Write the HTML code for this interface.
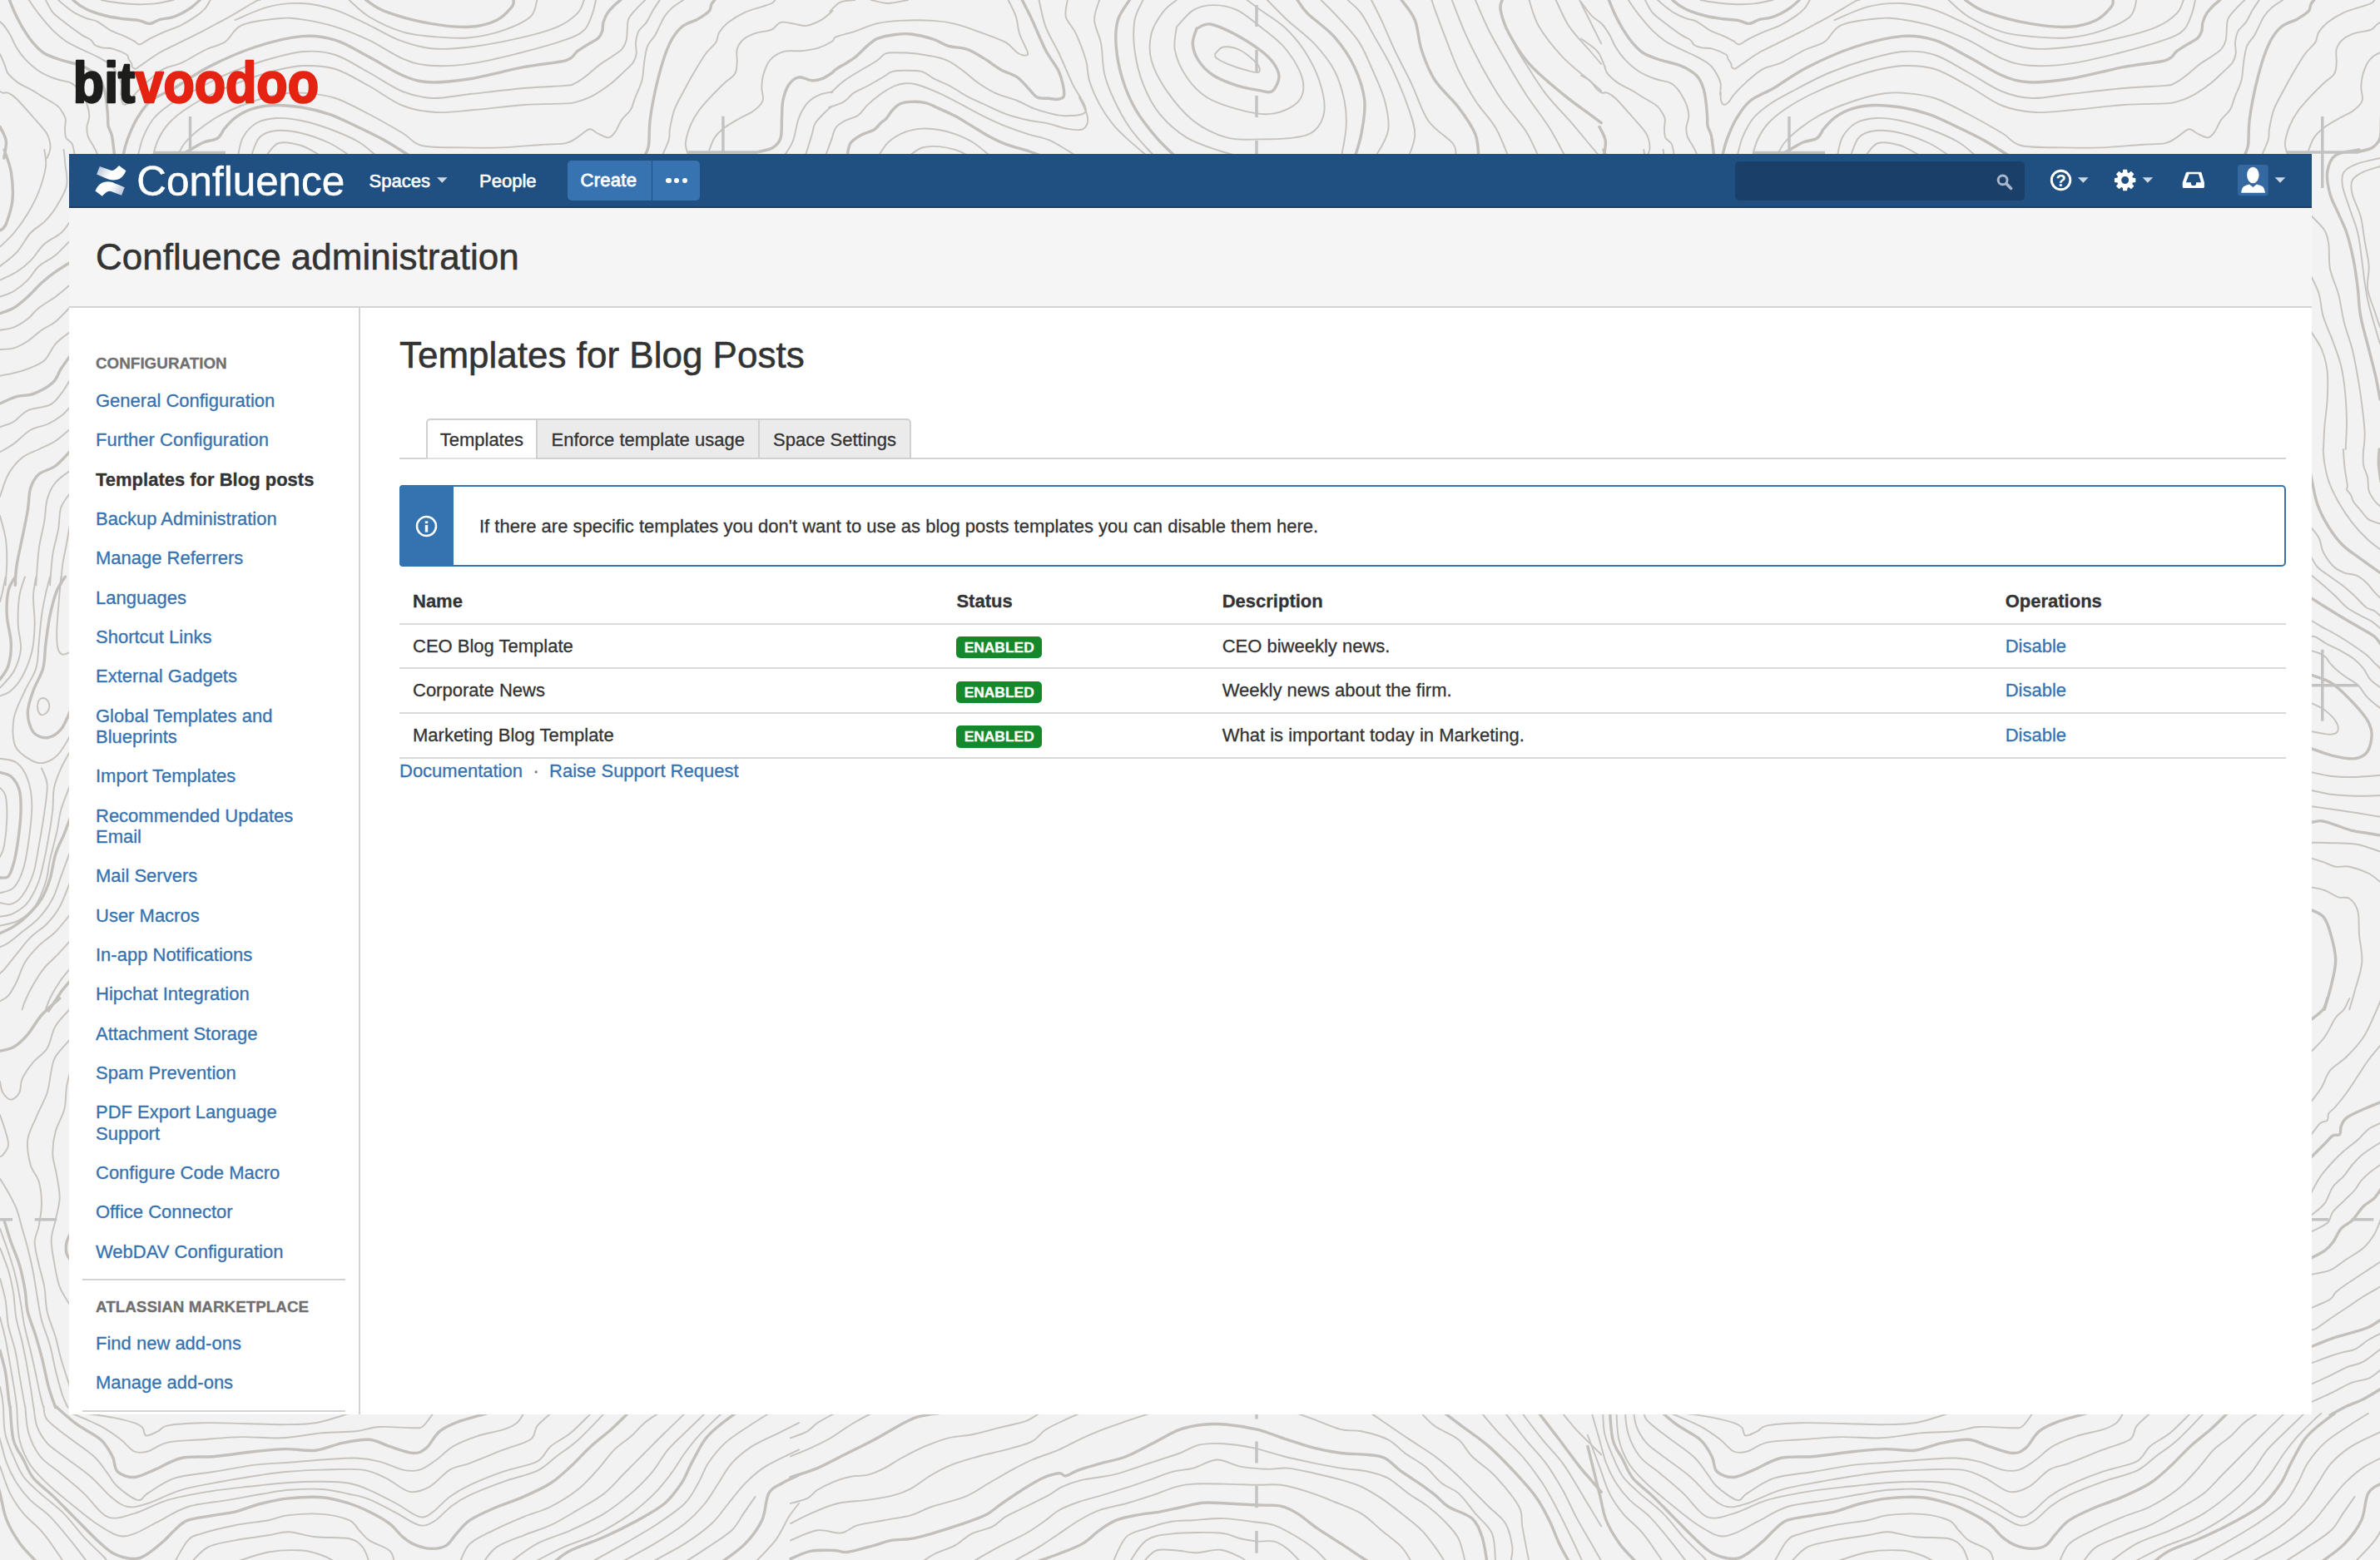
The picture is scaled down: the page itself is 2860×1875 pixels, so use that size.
<!DOCTYPE html>
<html lang="en">
<head>
<meta charset="utf-8">
<title>Templates for Blog Posts - Confluence administration</title>
<style>
*{box-sizing:border-box;margin:0;padding:0}
html,body{width:2860px;height:1875px;overflow:hidden}
body{position:relative;background:#f2f2f2;font-family:"Liberation Sans",Arial,Helvetica,sans-serif;font-size:22px;color:#333;-webkit-font-smoothing:antialiased;-webkit-text-stroke-width:.3px}
a{color:#3572b0;text-decoration:none}
#topo{position:absolute;left:0;top:0;width:2860px;height:1875px}
#brand{position:absolute;left:88px;top:56px;width:300px;height:80px;overflow:visible}
#wrap{position:absolute;left:83px;top:185px;width:2695px;height:1515px;background:#fff;overflow:hidden}
/* header */
#hdr{position:absolute;left:0;top:0;width:2695px;height:65px;background:#205081;border-bottom:2px solid #1c3d63;color:#fff}
#hdr .abs{position:absolute}
#cflogo{position:absolute;left:30px;top:12px;width:40px;height:40px}
#cfword{position:absolute;left:80px;top:4px;width:260px;height:56px}
.nav{position:absolute;top:.7px;height:63px;line-height:63px;font-size:22px;color:#fff;white-space:nowrap;-webkit-text-stroke:.6px #fff}
.caret{position:absolute;width:0;height:0;border-left:6.5px solid transparent;border-right:6.5px solid transparent;border-top:6.5px solid #c3d0df}
#create{position:absolute;left:599px;top:8px;width:101px;height:48px;background:#3873b1;border-radius:5px 0 0 5px;line-height:48.4px;text-align:left;padding-left:15.6px;font-size:22px;letter-spacing:.25px;-webkit-text-stroke:.8px #fff}
#more{position:absolute;left:701px;top:8px;width:57px;height:48px;background:#3873b1;border-radius:0 5px 5px 0}
#more i{position:absolute;top:20.5px;width:6.4px;height:6.4px;border-radius:50%;background:#fff}
#search{position:absolute;left:2002px;top:8.5px;width:347.5px;height:47px;background:#1a3f69;border-radius:5px}
.hic{position:absolute}
/* page header */
#phdr{position:absolute;left:0;top:65px;width:2695px;height:120px;background:#f5f5f5;border-bottom:2px solid #d3d3d3;z-index:2}
#phdr h1{-webkit-text-stroke-width:.55px;position:absolute;left:32px;top:25.6px;font-size:44px;font-weight:400;line-height:66px;color:#333;white-space:nowrap}
/* sidebar */
#side{position:absolute;left:0;top:184px;width:350px;height:1331px;border-right:2px solid #d3d3d3;background:#fff}
#side .hd{position:absolute;left:32px;font-size:18.85px;font-weight:700;color:#707070;line-height:25px;white-space:nowrap}
#side ul{list-style:none;position:absolute;left:32px;width:290px}
#side li{padding:11.06px 0;line-height:25.25px;font-size:22px}
#side li.act{font-weight:700;color:#333}
#side hr{position:absolute;left:16px;width:316px;border:0;border-top:2px solid #d3d3d3;height:0}
/* main */
#main{position:absolute;left:351px;top:184px;width:2344px;height:1331px;background:#fff}
#main h1{-webkit-text-stroke-width:.55px;position:absolute;left:46px;top:25px;font-size:44px;font-weight:400;line-height:66px;color:#333;white-space:nowrap}
#tabs{position:absolute;left:46px;top:134px;width:2266.5px;height:49px;border-bottom:2px solid #d3d3d3}
.tab{position:absolute;top:0;height:49px;border:2px solid #d0d0d0;background:#ebebeb;line-height:48.9px;font-size:22px;color:#333;text-align:center;white-space:nowrap}
.tab.on{background:#fff;border-bottom-color:#e0e0e0;border-radius:5px 0 0 0}
.tab.last{border-radius:0 5px 0 0}
#info{position:absolute;left:46px;top:214px;width:2266.5px;height:98px;border:2px solid #3572b0;border-radius:5px;background:#fff}
#info .bar{position:absolute;left:-2px;top:-2px;width:65px;height:98px;background:#3572b0;border-radius:4px 0 0 4px}
#info p{position:absolute;left:94px;top:34px;line-height:28px;font-size:22px;color:#333;white-space:nowrap}
table{position:absolute;left:46px;top:326.1px;width:2266.5px;border-collapse:collapse;font-size:22px}
th,td{text-align:left;font-weight:400;padding:0 0 0 16px;height:53.7px;border-bottom:2px solid #d9d9d9;vertical-align:middle;white-space:nowrap}
th{font-weight:700;height:54.6px;padding-top:2.4px}
.loz{display:inline-block;width:102.6px;height:26.4px;border-radius:5px;background:#14892c;color:#fff;font-size:17.4px;font-weight:700;line-height:26.4px;text-align:center;vertical-align:middle;position:relative;top:1px}
#links{position:absolute;left:46px;top:543.8px;line-height:28px;font-size:22px;white-space:nowrap}
#links span{color:#707070;margin:0 12.4px 0 12.4px}
</style>
</head>
<body>
<svg id="topo" viewBox="0 0 2860 1875">
<g id="tl">
<path fill="none" stroke="#c6c2be" stroke-width="1.9" stroke-linecap="round" d="M104.9,1698.9C110.3,1699.7 127.7,1702.2 137.2,1704.1C146.6,1706.0 155.6,1708.2 161.4,1710.2C167.1,1712.2 169.1,1713.7 171.4,1716.2C173.8,1718.8 172.4,1724.8 175.5,1725.5C178.5,1726.2 185.2,1722.3 189.6,1720.3C194.0,1718.2 193.0,1715.1 201.7,1713.4C210.4,1711.7 227.2,1710.6 242.0,1710.2C256.8,1709.8 274.3,1710.6 290.4,1711.0C306.6,1711.3 324.1,1712.3 338.8,1712.2C353.6,1712.1 365.7,1712.4 379.2,1710.2C392.6,1708.0 412.8,1700.8 419.5,1698.9
M86.7,1698.9C92.4,1701.4 111.3,1709.0 121.0,1714.2C130.8,1719.4 138.5,1725.3 145.2,1730.3C151.9,1735.4 156.0,1742.1 161.4,1744.5C166.7,1746.8 170.8,1746.3 177.5,1744.5C184.2,1742.6 190.9,1735.9 201.7,1733.6C212.5,1731.2 227.2,1731.4 242.0,1730.3C256.8,1729.3 274.3,1727.4 290.4,1727.1C306.6,1726.8 322.7,1729.1 338.8,1728.3C355.0,1727.5 372.5,1723.6 387.3,1722.3C402.0,1720.9 416.2,1721.5 427.6,1720.3C439.0,1719.0 444.4,1715.7 455.8,1715.0C467.3,1714.3 487.4,1716.4 496.2,1716.2C504.9,1716.1 504.2,1717.1 508.3,1714.2C512.3,1711.3 518.4,1701.4 520.4,1698.9
M52.4,1690.0C53.1,1692.7 51.8,1700.1 56.5,1706.1C61.2,1712.2 71.3,1718.9 80.7,1726.3C90.1,1733.7 104.9,1743.1 112.9,1750.5C121.0,1757.9 124.4,1764.6 129.1,1770.7C133.8,1776.7 135.1,1781.4 141.2,1786.8C147.2,1792.2 159.3,1801.6 165.4,1802.9C171.4,1804.3 170.1,1799.3 177.5,1794.9C184.9,1790.5 196.3,1781.1 209.8,1776.7C223.2,1772.4 242.0,1771.4 258.2,1768.7C274.3,1766.0 291.8,1762.4 306.6,1760.6C321.4,1758.8 333.5,1758.8 346.9,1757.8C360.4,1756.8 373.8,1755.4 387.3,1754.5C400.7,1753.7 416.2,1752.2 427.6,1752.5C439.0,1752.9 446.4,1754.2 455.8,1756.6C465.2,1758.9 476.0,1765.0 484.1,1766.6C492.1,1768.3 497.5,1768.7 504.2,1766.6C511.0,1764.6 517.7,1759.2 524.4,1754.5C531.1,1749.8 536.5,1743.1 544.6,1738.4C552.6,1733.7 562.7,1729.7 572.8,1726.3C582.9,1722.9 597.0,1720.9 605.1,1718.2C613.2,1715.5 617.2,1713.4 621.2,1710.2C625.3,1706.9 627.9,1700.8 629.3,1698.9
M40.3,1690.0C41.0,1694.0 41.7,1706.8 44.4,1714.2C47.1,1721.6 51.1,1728.3 56.5,1734.4C61.9,1740.4 67.9,1743.8 76.6,1750.5C85.4,1757.2 99.5,1766.6 108.9,1774.7C118.3,1782.8 125.7,1792.9 133.1,1798.9C140.5,1805.0 145.9,1809.7 153.3,1811.0C160.7,1812.4 166.7,1810.3 177.5,1807.0C188.2,1803.6 203.0,1795.2 217.8,1790.8C232.6,1786.5 250.1,1783.8 266.2,1780.8C282.4,1777.7 301.2,1774.7 314.6,1772.7C328.1,1770.7 334.8,1769.7 346.9,1768.7C359.0,1767.7 372.5,1767.0 387.3,1766.6C402.0,1766.3 422.9,1765.0 435.7,1766.6C448.4,1768.3 454.5,1772.4 463.9,1776.7C473.3,1781.1 483.4,1791.2 492.1,1792.9C500.9,1794.5 508.3,1791.2 516.3,1786.8C524.4,1782.4 532.5,1771.4 540.5,1766.6C548.6,1761.9 554.0,1762.6 564.7,1758.6C575.5,1754.5 593.0,1747.1 605.1,1742.4C617.2,1737.7 630.6,1735.0 637.4,1730.3C644.1,1725.6 641.4,1719.4 645.4,1714.2C649.5,1709.0 658.9,1701.4 661.6,1698.9
M30.3,1690.0C30.9,1695.4 31.3,1712.2 34.3,1722.3C37.3,1732.4 42.0,1742.4 48.4,1750.5C54.8,1758.6 63.9,1763.3 72.6,1770.7C81.4,1778.1 91.4,1786.1 100.8,1794.9C110.3,1803.6 119.0,1819.1 129.1,1823.1C139.2,1827.2 149.3,1822.4 161.4,1819.1C173.5,1815.7 186.9,1807.3 201.7,1802.9C216.5,1798.6 234.0,1795.6 250.1,1792.9C266.2,1790.2 282.4,1788.6 298.5,1786.8C314.6,1785.0 332.1,1783.0 346.9,1782.0C361.7,1781.0 375.2,1780.6 387.3,1780.8C399.4,1780.9 410.1,1781.1 419.5,1782.8C428.9,1784.5 434.3,1786.8 443.7,1790.8C453.1,1794.9 465.9,1801.6 476.0,1807.0C486.1,1812.4 496.8,1821.4 504.2,1823.1C511.6,1824.8 514.3,1821.1 520.4,1817.1C526.4,1813.0 533.1,1804.3 540.5,1798.9C547.9,1793.5 554.0,1789.8 564.7,1784.8C575.5,1779.8 591.6,1773.4 605.1,1768.7C618.5,1764.0 636.0,1761.6 645.4,1756.6C654.8,1751.5 654.8,1744.1 661.6,1738.4C668.3,1732.7 677.7,1728.9 685.8,1722.3C693.8,1715.7 705.9,1702.8 710.0,1698.9
M20.2,1690.0C20.7,1696.7 20.7,1718.6 23.4,1730.3C26.1,1742.1 30.5,1751.5 36.3,1760.6C42.2,1769.7 50.4,1777.1 58.5,1784.8C66.6,1792.5 75.6,1799.6 84.7,1807.0C93.8,1814.4 103.5,1822.8 112.9,1829.2C122.4,1835.6 133.1,1843.0 141.2,1845.3C149.3,1847.7 153.3,1846.0 161.4,1843.3C169.4,1840.6 178.8,1834.5 189.6,1829.2C200.3,1823.8 211.8,1815.4 225.9,1811.0C240.0,1806.6 259.5,1805.5 274.3,1802.9C289.1,1800.4 302.5,1797.7 314.6,1795.7C326.7,1793.7 334.8,1791.8 346.9,1790.8C359.0,1789.9 375.2,1789.2 387.3,1790.0C399.4,1790.8 410.1,1793.7 419.5,1795.7C428.9,1797.7 434.3,1798.4 443.7,1802.1C453.1,1805.9 465.9,1813.1 476.0,1818.3C486.1,1823.5 496.5,1831.6 504.2,1833.2C512.0,1834.8 516.0,1831.8 522.4,1828.0C528.8,1824.1 535.5,1815.4 542.6,1810.2C549.6,1805.0 554.3,1801.8 564.7,1796.9C575.2,1792.0 591.6,1785.6 605.1,1780.8C618.5,1775.9 634.7,1773.0 645.4,1767.9C656.2,1762.7 661.6,1755.8 669.6,1749.7C677.7,1743.7 684.4,1740.0 693.8,1731.5C703.2,1723.1 720.7,1704.3 726.1,1698.9
M-14.1,1680.9C-11.8,1689.2 -3.7,1717.4 0.0,1730.3C3.7,1743.3 4.7,1749.8 8.1,1758.6C11.4,1767.3 15.5,1775.4 20.2,1782.8C24.9,1790.2 29.6,1796.2 36.3,1802.9C43.0,1809.7 52.4,1815.1 60.5,1823.1C68.6,1831.2 77.3,1842.3 84.7,1851.4C92.1,1860.4 101.5,1873.2 104.9,1877.6
M-14.1,1725.0C-11.8,1731.2 -4.4,1751.0 0.0,1762.6C4.4,1774.3 7.4,1785.5 12.1,1794.9C16.8,1804.3 21.5,1811.0 28.2,1819.1C35.0,1827.2 44.4,1833.5 52.4,1843.3C60.5,1853.0 72.6,1871.9 76.6,1877.6
M4.0,1690.0C4.4,1695.4 4.0,1712.2 6.1,1722.3C8.1,1732.4 12.4,1741.8 16.1,1750.5C19.8,1759.2 22.9,1767.3 28.2,1774.7C33.6,1782.1 40.3,1787.5 48.4,1794.9C56.5,1802.3 67.9,1810.3 76.6,1819.1C85.4,1827.8 92.8,1838.6 100.8,1847.3C108.9,1856.1 120.3,1866.5 125.1,1871.5C129.8,1876.6 128.4,1876.6 129.1,1877.6
M209.8,1877.6C212.5,1873.2 220.5,1857.1 225.9,1851.4C231.3,1845.6 232.6,1846.3 242.0,1843.3C251.4,1840.3 268.9,1835.9 282.4,1833.2C295.8,1830.5 312.0,1829.2 322.7,1827.2C333.5,1825.1 336.2,1822.3 346.9,1821.1C357.7,1819.9 375.2,1818.9 387.3,1819.9C399.4,1820.9 412.1,1823.9 419.5,1827.2C426.9,1830.4 427.6,1835.2 431.6,1839.3C435.7,1843.3 437.7,1847.3 443.7,1851.4C449.8,1855.4 462.9,1859.1 467.9,1863.5C473.0,1867.8 473.0,1875.2 474.0,1877.6
M229.9,1877.6C233.3,1874.6 241.4,1863.8 250.1,1859.4C258.8,1855.1 270.3,1853.7 282.4,1851.4C294.5,1849.0 312.0,1847.0 322.7,1845.3C333.5,1843.6 337.5,1840.9 346.9,1841.3C356.3,1841.6 367.1,1846.0 379.2,1847.3C391.3,1848.7 410.1,1847.3 419.5,1849.3C428.9,1851.4 431.6,1854.7 435.7,1859.4C439.7,1864.1 442.4,1874.6 443.7,1877.6
M282.4,1877.6C289.1,1875.6 309.3,1867.8 322.7,1865.5C336.2,1863.1 352.3,1862.8 363.0,1863.5C373.8,1864.1 380.5,1867.2 387.3,1869.5C394.0,1871.9 400.7,1876.2 403.4,1877.6
M552.6,1877.6C554.7,1873.9 558.0,1861.8 564.7,1855.4C571.5,1849.0 582.2,1844.6 593.0,1839.3C603.7,1833.9 617.9,1827.8 629.3,1823.1C640.7,1818.4 650.8,1816.4 661.6,1811.0C672.3,1805.6 684.4,1798.2 693.8,1790.8C703.2,1783.5 710.6,1774.7 718.0,1766.6C725.4,1758.6 731.5,1749.2 738.2,1742.4C744.9,1735.7 752.3,1731.7 758.4,1726.3C764.4,1720.9 769.1,1714.7 774.5,1710.2C779.9,1705.6 788.0,1700.8 790.6,1698.9
M580.9,1877.6C583.6,1874.6 588.9,1864.8 597.0,1859.4C605.1,1854.0 618.5,1849.7 629.3,1845.3C640.0,1840.9 650.8,1838.2 661.6,1833.2C672.3,1828.2 683.1,1821.4 693.8,1815.1C704.6,1808.7 716.7,1802.3 726.1,1794.9C735.5,1787.5 742.2,1778.7 750.3,1770.7C758.4,1762.6 766.4,1754.5 774.5,1746.5C782.6,1738.4 790.6,1730.2 798.7,1722.3C806.8,1714.3 818.9,1702.8 822.9,1698.9
M613.2,1877.6C618.5,1873.9 633.3,1861.8 645.4,1855.4C657.5,1849.0 672.3,1845.3 685.8,1839.3C699.2,1833.2 714.0,1826.5 726.1,1819.1C738.2,1811.7 749.0,1802.9 758.4,1794.9C767.8,1786.8 775.2,1779.4 782.6,1770.7C790.0,1761.9 796.0,1750.5 802.7,1742.4C809.5,1734.4 815.5,1729.5 822.9,1722.3C830.3,1715.0 843.1,1702.8 847.1,1698.9
M641.4,1877.6C647.4,1874.6 664.9,1865.1 677.7,1859.4C690.5,1853.7 704.6,1850.0 718.0,1843.3C731.5,1836.6 746.9,1827.2 758.4,1819.1C769.8,1811.0 778.5,1802.9 786.6,1794.9C794.7,1786.8 800.7,1778.7 806.8,1770.7C812.8,1762.6 817.5,1753.9 822.9,1746.5C828.3,1739.1 833.0,1733.0 839.0,1726.3C845.1,1719.6 854.5,1710.7 859.2,1706.1C863.9,1701.6 865.9,1700.1 867.3,1698.9
M710.0,1877.6C716.7,1873.9 736.9,1863.1 750.3,1855.4C763.7,1847.7 778.5,1839.3 790.6,1831.2C802.7,1823.1 814.8,1815.1 822.9,1807.0C831.0,1798.9 834.3,1790.8 839.0,1782.8C843.8,1774.7 845.8,1766.6 851.1,1758.6C856.5,1750.5 863.3,1741.8 871.3,1734.4C879.4,1727.0 890.8,1720.1 899.6,1714.2C908.3,1708.3 919.7,1701.4 923.8,1698.9
M746.3,1877.6C753.0,1873.9 773.8,1863.1 786.6,1855.4C799.4,1847.7 812.8,1839.3 822.9,1831.2C833.0,1823.1 840.4,1815.1 847.1,1807.0C853.8,1798.9 857.9,1790.8 863.3,1782.8C868.6,1774.7 872.7,1766.0 879.4,1758.6C886.1,1751.2 894.2,1744.5 903.6,1738.4C913.0,1732.4 926.4,1727.0 935.9,1722.3C945.3,1717.6 956.0,1712.2 960.1,1710.2
M782.6,1877.6C789.3,1873.9 810.8,1863.1 822.9,1855.4C835.0,1847.7 846.4,1839.3 855.2,1831.2C863.9,1823.1 868.6,1815.1 875.4,1807.0C882.1,1798.9 888.1,1790.2 895.5,1782.8C902.9,1775.4 909.0,1769.3 919.7,1762.6C930.5,1755.9 953.3,1745.8 960.1,1742.4
M907.6,1877.6C911.7,1873.2 925.1,1860.4 931.8,1851.4C938.6,1842.3 943.3,1830.5 948.0,1823.1C952.7,1815.7 958.0,1809.7 960.1,1807.0
M822.9,1877.6C827.6,1874.6 841.7,1865.8 851.1,1859.4C860.6,1853.0 872.3,1846.0 879.4,1839.3C886.4,1832.5 888.8,1825.8 893.5,1819.1C898.2,1812.4 905.3,1802.3 907.6,1798.9
M950.0,1728.3C953.4,1727.0 964.8,1723.3 970.2,1720.3C975.5,1717.2 976.9,1713.7 982.3,1710.2C987.6,1706.6 999.1,1700.8 1002.4,1698.9
M950.0,1750.5C954.0,1748.8 966.1,1744.1 974.2,1740.4C982.3,1736.7 990.3,1733.0 998.4,1728.3C1006.5,1723.6 1014.5,1717.1 1022.6,1712.2C1030.7,1707.3 1042.8,1701.1 1046.8,1698.9
M950.0,1807.0C953.4,1806.0 964.8,1803.6 970.2,1800.9C975.5,1798.2 976.9,1794.2 982.3,1790.8C987.6,1787.5 995.7,1783.5 1002.4,1780.8C1009.2,1778.1 1015.9,1776.1 1022.6,1774.7C1029.3,1773.4 1036.1,1774.4 1042.8,1772.7C1049.5,1771.0 1056.2,1768.0 1062.9,1764.6C1069.7,1761.3 1075.1,1756.9 1083.1,1752.5C1091.2,1748.2 1101.9,1742.4 1111.4,1738.4C1120.8,1734.4 1130.2,1730.7 1139.6,1728.3C1149.0,1726.0 1157.7,1726.3 1167.8,1724.3C1177.9,1722.3 1189.3,1718.9 1200.1,1716.2C1210.9,1713.5 1224.3,1711.0 1232.4,1708.2C1240.4,1705.3 1245.8,1700.4 1248.5,1698.9
M950.0,1831.2C954.0,1829.2 964.8,1823.1 974.2,1819.1C983.6,1815.1 995.0,1809.7 1006.5,1807.0C1017.9,1804.3 1031.4,1804.6 1042.8,1802.9C1054.2,1801.3 1066.3,1799.3 1075.1,1796.9C1083.8,1794.5 1087.8,1792.9 1095.2,1788.8C1102.6,1784.8 1111.4,1777.4 1119.4,1772.7C1127.5,1768.0 1134.2,1764.3 1143.6,1760.6C1153.0,1756.9 1167.8,1752.9 1175.9,1750.5C1184.0,1748.2 1185.3,1748.2 1192.0,1746.5C1198.8,1744.8 1208.2,1742.8 1216.2,1740.4C1224.3,1738.1 1233.7,1736.1 1240.4,1732.4C1247.2,1728.7 1249.9,1722.6 1256.6,1718.2C1263.3,1713.9 1274.1,1709.4 1280.8,1706.1C1287.5,1702.9 1294.2,1700.1 1296.9,1698.9
M950.0,1851.4C955.4,1849.3 972.2,1840.7 982.3,1839.3C992.4,1837.8 1002.4,1843.5 1010.5,1842.5C1018.6,1841.5 1021.9,1835.8 1030.7,1833.2C1039.4,1830.6 1052.2,1829.2 1062.9,1827.2C1073.7,1825.1 1085.8,1823.8 1095.2,1821.1C1104.6,1818.4 1108.7,1814.7 1119.4,1811.0C1130.2,1807.3 1148.3,1803.6 1159.8,1798.9C1171.2,1794.2 1178.6,1788.2 1188.0,1782.8C1197.4,1777.4 1207.5,1771.4 1216.2,1766.6C1225.0,1761.9 1231.0,1758.6 1240.4,1754.5C1249.9,1750.5 1263.3,1746.5 1272.7,1742.4C1282.1,1738.4 1288.2,1734.4 1296.9,1730.3C1305.7,1726.3 1315.7,1721.9 1325.2,1718.2C1334.6,1714.5 1344.0,1711.4 1353.4,1708.2C1362.8,1704.9 1376.9,1700.4 1381.6,1698.9
M1107.3,1877.6C1110.0,1875.9 1116.7,1870.9 1123.5,1867.5C1130.2,1864.1 1140.3,1861.4 1147.7,1857.4C1155.1,1853.4 1160.4,1847.0 1167.8,1843.3C1175.2,1839.6 1185.3,1838.6 1192.0,1835.2C1198.8,1831.9 1201.4,1827.2 1208.2,1823.1C1214.9,1819.1 1223.6,1815.4 1232.4,1811.0C1241.1,1806.6 1253.2,1800.9 1260.6,1796.9C1268.0,1792.9 1270.0,1789.8 1276.7,1786.8C1283.5,1783.8 1290.9,1781.1 1300.9,1778.7C1311.0,1776.4 1325.8,1775.4 1337.3,1772.7C1348.7,1770.0 1360.1,1765.6 1369.5,1762.6C1378.9,1759.6 1385.7,1757.2 1393.7,1754.5C1401.8,1751.9 1409.9,1749.5 1417.9,1746.5C1426.0,1743.4 1433.4,1738.3 1442.1,1736.4C1450.9,1734.5 1459.6,1734.5 1470.4,1735.2C1481.1,1735.9 1494.6,1737.9 1506.7,1740.4C1518.8,1743.0 1530.9,1747.5 1543.0,1750.5C1555.1,1753.5 1567.9,1756.2 1579.3,1758.6C1590.7,1760.9 1600.8,1762.9 1611.6,1764.6C1622.3,1766.3 1634.4,1766.6 1643.8,1768.7C1653.2,1770.7 1660.0,1772.4 1668.0,1776.7C1676.1,1781.1 1684.2,1789.2 1692.2,1794.9C1700.3,1800.6 1709.0,1805.3 1716.4,1811.0C1723.8,1816.7 1730.6,1822.8 1736.6,1829.2C1742.7,1835.6 1748.7,1841.3 1752.7,1849.3C1756.8,1857.4 1759.5,1872.9 1760.8,1877.6
M1167.8,1877.6C1173.2,1874.6 1189.3,1865.1 1200.1,1859.4C1210.9,1853.7 1223.0,1848.7 1232.4,1843.3C1241.8,1837.9 1249.9,1831.9 1256.6,1827.2C1263.3,1822.4 1266.0,1818.7 1272.7,1815.1C1279.4,1811.4 1288.2,1808.0 1296.9,1805.0C1305.7,1801.9 1315.1,1799.9 1325.2,1796.9C1335.2,1793.9 1348.0,1789.8 1357.4,1786.8C1366.8,1783.8 1372.9,1781.8 1381.6,1778.7C1390.4,1775.7 1401.1,1771.0 1409.9,1768.7C1418.6,1766.3 1425.3,1767.0 1434.1,1764.6C1442.8,1762.3 1452.9,1754.9 1462.3,1754.5C1471.7,1754.2 1480.5,1760.7 1490.5,1762.6C1500.6,1764.5 1513.4,1765.5 1522.8,1765.8C1532.2,1766.2 1537.6,1763.8 1547.0,1764.6C1556.4,1765.4 1568.5,1768.3 1579.3,1770.7C1590.0,1773.0 1602.1,1776.1 1611.6,1778.7C1621.0,1781.4 1627.7,1783.1 1635.8,1786.8C1643.8,1790.5 1651.9,1795.6 1660.0,1800.9C1668.0,1806.3 1676.1,1812.7 1684.2,1819.1C1692.2,1825.5 1701.6,1832.5 1708.4,1839.3C1715.1,1846.0 1719.8,1853.0 1724.5,1859.4C1729.2,1865.8 1734.6,1874.6 1736.6,1877.6
M1216.2,1877.6C1221.6,1874.6 1239.1,1865.1 1248.5,1859.4C1257.9,1853.7 1264.6,1848.7 1272.7,1843.3C1280.8,1837.9 1288.8,1831.9 1296.9,1827.2C1305.0,1822.4 1311.7,1818.4 1321.1,1815.1C1330.5,1811.7 1342.6,1810.0 1353.4,1807.0C1364.1,1804.0 1375.6,1800.3 1385.7,1796.9C1395.7,1793.5 1405.8,1789.0 1413.9,1786.8C1422.0,1784.6 1424.7,1784.1 1434.1,1783.6C1443.5,1783.0 1457.6,1783.4 1470.4,1783.6C1483.1,1783.8 1499.3,1784.6 1510.7,1784.8C1522.1,1785.0 1528.9,1783.5 1538.9,1784.8C1549.0,1786.1 1560.5,1789.5 1571.2,1792.9C1582.0,1796.2 1592.7,1800.6 1603.5,1805.0C1614.2,1809.3 1626.3,1813.4 1635.8,1819.1C1645.2,1824.8 1651.9,1832.5 1660.0,1839.3C1668.0,1846.0 1678.1,1853.0 1684.2,1859.4C1690.2,1865.8 1694.3,1874.6 1696.3,1877.6
M1337.3,1877.6C1339.9,1872.5 1346.7,1854.0 1353.4,1847.3C1360.1,1840.6 1368.9,1840.3 1377.6,1837.2C1386.3,1834.2 1396.4,1830.8 1405.8,1829.2C1415.2,1827.5 1423.3,1827.8 1434.1,1827.2C1444.8,1826.5 1458.3,1824.8 1470.4,1825.1C1482.5,1825.5 1496.6,1827.8 1506.7,1829.2C1516.8,1830.5 1522.8,1830.5 1530.9,1833.2C1538.9,1835.9 1547.0,1840.6 1555.1,1845.3C1563.2,1850.0 1572.6,1856.1 1579.3,1861.4C1586.0,1866.8 1592.7,1874.9 1595.4,1877.6
M1357.4,1877.6C1360.8,1873.2 1368.9,1857.1 1377.6,1851.4C1386.3,1845.6 1395.1,1844.8 1409.9,1843.3C1424.7,1841.8 1452.9,1841.5 1466.3,1842.5C1479.8,1843.5 1483.1,1847.7 1490.5,1849.3C1497.9,1851.0 1504.0,1852.0 1510.7,1852.6C1517.4,1853.1 1524.8,1851.1 1530.9,1852.6C1536.9,1854.0 1541.6,1857.3 1547.0,1861.4C1552.4,1865.6 1560.5,1874.9 1563.2,1877.6
M1373.6,1877.6C1376.2,1875.2 1383.0,1865.8 1389.7,1863.5C1396.4,1861.1 1405.8,1863.0 1413.9,1863.5C1422.0,1863.9 1429.4,1866.4 1438.1,1866.3C1446.8,1866.1 1457.6,1861.8 1466.3,1862.7C1475.1,1863.5 1485.2,1869.0 1490.5,1871.5C1495.9,1874.0 1497.3,1876.6 1498.6,1877.6
M1647.9,1698.9C1652.6,1702.1 1667.4,1712.3 1676.1,1718.2C1684.8,1724.2 1692.2,1729.0 1700.3,1734.4C1708.4,1739.8 1716.4,1744.5 1724.5,1750.5C1732.6,1756.6 1741.3,1764.0 1748.7,1770.7C1756.1,1777.4 1762.2,1784.1 1768.9,1790.8C1775.6,1797.6 1782.3,1804.3 1789.0,1811.0C1795.8,1817.7 1804.5,1823.1 1809.2,1831.2C1813.9,1839.3 1816.3,1851.7 1817.3,1859.4C1818.3,1867.2 1815.6,1874.6 1815.3,1877.6
M1708.4,1698.9C1711.1,1701.4 1717.1,1709.0 1724.5,1714.2C1731.9,1719.4 1745.3,1724.3 1752.7,1730.3C1760.1,1736.4 1761.5,1743.1 1768.9,1750.5C1776.3,1757.9 1787.7,1764.6 1797.1,1774.7C1806.5,1784.8 1820.0,1800.9 1825.4,1811.0C1830.7,1821.1 1827.4,1824.1 1829.4,1835.2C1831.4,1846.3 1836.1,1870.5 1837.5,1877.6
M1559.1,1698.9C1562.5,1700.1 1570.5,1702.9 1579.3,1706.1C1588.0,1709.4 1602.1,1715.9 1611.6,1718.2C1621.0,1720.6 1626.3,1718.2 1635.8,1720.3C1645.2,1722.3 1659.3,1726.0 1668.0,1730.3C1676.8,1734.7 1680.8,1741.1 1688.2,1746.5C1695.6,1751.9 1705.0,1756.6 1712.4,1762.6C1719.8,1768.7 1725.9,1777.4 1732.6,1782.8C1739.3,1788.2 1746.0,1788.8 1752.7,1794.9C1759.5,1800.9 1766.2,1811.0 1772.9,1819.1C1779.6,1827.2 1789.0,1833.5 1793.1,1843.3C1797.1,1853.0 1796.4,1871.9 1797.1,1877.6
M1781.0,1698.9C1784.3,1702.8 1793.1,1713.7 1801.1,1722.3C1809.2,1730.9 1820.6,1740.4 1829.4,1750.5C1838.1,1760.6 1846.9,1772.7 1853.6,1782.8C1860.3,1792.9 1864.3,1800.9 1869.7,1811.0C1875.1,1821.1 1880.5,1832.2 1885.9,1843.3C1891.2,1854.4 1899.3,1871.9 1902.0,1877.6
M1809.2,1698.9C1813.3,1704.1 1825.4,1720.4 1833.4,1730.3C1841.5,1740.3 1850.2,1748.5 1857.6,1758.6C1865.0,1768.7 1871.7,1780.1 1877.8,1790.8C1883.8,1801.6 1888.6,1813.0 1893.9,1823.1C1899.3,1833.2 1905.0,1842.5 1910.1,1851.4C1915.1,1860.2 1921.8,1871.9 1924.2,1876.1
M1829.4,1698.9C1833.4,1704.1 1845.5,1720.4 1853.6,1730.3C1861.7,1740.3 1870.4,1748.5 1877.8,1758.6C1885.2,1768.7 1892.6,1782.1 1898.0,1790.8C1903.3,1799.6 1905.7,1803.7 1910.1,1811.0C1914.4,1818.3 1921.8,1830.6 1924.2,1834.5
M1877.8,1698.9C1880.5,1702.1 1888.6,1712.3 1893.9,1718.2C1899.3,1724.2 1905.0,1729.3 1910.1,1734.4C1915.1,1739.4 1921.8,1746.1 1924.2,1748.5
M53.3,180.0C53.6,183.3 56.1,191.7 55.0,200.0C53.9,208.3 50.3,220.6 46.7,230.0C43.1,239.4 38.3,248.3 33.3,256.7C28.3,265.0 22.2,273.3 16.7,280.0C11.1,286.7 2.8,293.9 0.0,296.7
M76.7,180.0C76.9,182.8 77.8,189.4 78.3,196.7C78.9,203.9 81.9,214.4 80.0,223.3C78.1,232.2 71.1,242.8 66.7,250.0C62.2,257.2 58.3,261.7 53.3,266.7C48.3,271.7 42.2,273.9 36.7,280.0C31.1,286.1 26.1,296.7 20.0,303.3C13.9,310.0 3.3,317.2 0.0,320.0
M85.0,265.0C83.1,267.5 78.6,275.3 73.3,280.0C68.1,284.7 59.4,287.8 53.3,293.3C47.2,298.9 42.2,307.8 36.7,313.3C31.1,318.9 26.1,322.8 20.0,326.7C13.9,330.6 3.3,335.0 0.0,336.7
M85.0,288.3C81.9,291.4 73.1,301.4 66.7,306.7C60.3,311.9 52.2,315.0 46.7,320.0C41.1,325.0 38.3,331.7 33.3,336.7C28.3,341.7 22.2,346.7 16.7,350.0C11.1,353.3 2.8,355.6 0.0,356.7
M85.0,341.7C81.9,344.2 73.1,351.9 66.7,356.7C60.3,361.4 52.2,365.6 46.7,370.0C41.1,374.4 38.3,379.4 33.3,383.3C28.3,387.2 22.2,391.1 16.7,393.3C11.1,395.6 2.8,396.1 0.0,396.7
M85.0,368.3C81.9,371.4 72.5,381.9 66.7,386.7C60.8,391.4 55.6,392.8 50.0,396.7C44.4,400.6 38.9,406.4 33.3,410.0C27.8,413.6 22.2,416.7 16.7,418.3C11.1,420.0 2.8,419.7 0.0,420.0
M85.0,398.3C81.9,400.8 71.9,407.5 66.7,413.3C61.4,419.2 58.9,428.3 53.3,433.3C47.8,438.3 39.4,440.8 33.3,443.3C27.2,445.8 22.2,446.9 16.7,448.3C11.1,449.7 2.8,451.1 0.0,451.7
M85.0,455.0C83.1,458.1 77.5,468.1 73.3,473.3C69.2,478.6 66.7,483.3 60.0,486.7C53.3,490.0 40.6,490.0 33.3,493.3C26.1,496.7 22.2,503.3 16.7,506.7C11.1,510.0 2.8,512.2 0.0,513.3
M85.0,488.3C83.1,490.3 78.1,496.4 73.3,500.0C68.6,503.6 62.8,507.2 56.7,510.0C50.6,512.8 43.3,512.8 36.7,516.7C30.0,520.6 22.8,528.9 16.7,533.3C10.6,537.8 2.8,541.7 0.0,543.3
M85.0,515.0C81.9,517.5 73.1,525.8 66.7,530.0C60.3,534.2 53.3,536.7 46.7,540.0C40.0,543.3 32.8,545.0 26.7,550.0C20.6,555.0 14.4,562.2 10.0,570.0C5.6,577.8 1.7,592.2 0.0,596.7
M85.0,565.0C81.9,567.5 71.4,574.2 66.7,580.0C61.9,585.8 58.9,592.2 56.7,600.0C54.4,607.8 55.0,616.7 53.3,626.7C51.7,636.7 48.3,647.2 46.7,660.0C45.0,672.8 43.9,696.1 43.3,703.3
M85.0,591.7C83.1,594.7 75.8,602.5 73.3,610.0C70.8,617.5 71.7,627.2 70.0,636.7C68.3,646.1 65.0,655.6 63.3,666.7C61.7,677.8 60.6,697.2 60.0,703.3
M85.0,625.0C84.2,629.7 81.7,644.2 80.0,653.3C78.3,662.5 76.1,671.7 75.0,680.0C73.9,688.3 73.6,699.4 73.3,703.3
M0.0,620.0C1.1,624.4 5.3,637.8 6.7,646.7C8.1,655.6 8.3,663.9 8.3,673.3C8.3,682.8 6.9,698.3 6.7,703.3
M43.3,693.3C42.8,697.2 40.3,707.2 40.0,716.7C39.7,726.1 41.9,738.9 41.7,750.0C41.4,761.1 40.8,772.8 38.3,783.3C35.8,793.9 30.8,805.6 26.7,813.3C22.5,821.1 17.8,826.1 13.3,830.0C8.9,833.9 2.2,835.6 0.0,836.7
M6.7,693.3C6.1,696.1 4.4,705.0 3.3,710.0C2.2,715.0 0.6,721.1 0.0,723.3
M60.0,693.3C59.2,696.7 56.7,705.6 55.0,713.3C53.3,721.1 51.4,730.0 50.0,740.0C48.6,750.0 47.8,762.8 46.7,773.3C45.6,783.9 46.1,793.9 43.3,803.3C40.6,812.8 34.4,820.0 30.0,830.0C25.6,840.0 18.6,852.2 16.7,863.3C14.7,874.4 15.0,888.3 18.3,896.7C21.7,905.0 30.8,910.0 36.7,913.3C42.5,916.7 47.8,917.8 53.3,916.7C58.9,915.6 64.7,912.2 70.0,906.7C75.3,901.1 82.5,887.2 85.0,883.3
M73.3,693.3C72.9,698.3 71.5,712.8 70.7,723.3C69.8,733.9 68.6,747.5 68.3,756.7C68.1,765.8 68.2,773.3 69.3,778.3C70.4,783.3 72.4,785.8 75.0,786.7C77.6,787.5 83.3,783.9 85.0,783.3
M30.0,693.3C28.9,697.2 24.7,707.2 23.3,716.7C21.9,726.1 21.4,739.4 21.7,750.0C21.9,760.6 25.8,770.6 25.0,780.0C24.2,789.4 20.8,798.9 16.7,806.7C12.5,814.4 2.8,823.3 0.0,826.7
M45.0,848.3C45.3,847.2 45.6,843.2 46.7,841.7C47.8,840.1 49.9,838.9 51.7,839.0C53.4,839.1 56.1,840.6 57.3,842.3C58.6,844.1 59.6,846.9 59.3,849.3C59.1,851.7 57.6,855.0 56.0,856.7C54.4,858.3 51.7,859.6 50.0,859.3C48.3,859.1 46.8,856.8 46.0,855.0C45.2,853.2 45.2,849.4 45.0,848.3
M0.0,946.7C1.1,948.3 5.3,950.6 6.7,956.7C8.1,962.8 8.6,973.3 8.3,983.3C8.1,993.3 6.4,1008.9 5.0,1016.7C3.6,1024.4 0.8,1027.8 0.0,1030.0
M0.0,911.7C3.3,912.5 14.4,912.5 20.0,916.7C25.6,920.8 30.3,928.3 33.3,936.7C36.4,945.0 38.1,955.0 38.3,966.7C38.6,978.3 36.7,993.9 35.0,1006.7C33.3,1019.4 31.4,1033.3 28.3,1043.3C25.3,1053.3 21.4,1061.7 16.7,1066.7C11.9,1071.7 2.8,1072.2 0.0,1073.3
M50.0,923.3C51.1,926.7 56.1,934.4 56.7,943.3C57.2,952.2 55.0,964.4 53.3,976.7C51.7,988.9 48.9,1004.4 46.7,1016.7C44.4,1028.9 43.3,1040.0 40.0,1050.0C36.7,1060.0 31.1,1070.6 26.7,1076.7C22.2,1082.8 17.8,1085.3 13.3,1086.7C8.9,1088.1 2.2,1085.3 0.0,1085.0
M85.0,901.7C83.1,905.3 76.7,915.8 73.3,923.3C70.0,930.8 66.7,938.3 65.0,946.7C63.3,955.0 64.4,963.3 63.3,973.3C62.2,983.3 60.3,995.6 58.3,1006.7C56.4,1017.8 53.9,1030.6 51.7,1040.0C49.4,1049.4 48.3,1055.6 45.0,1063.3C41.7,1071.1 36.7,1080.8 31.7,1086.7C26.7,1092.5 20.3,1095.8 15.0,1098.3C9.7,1100.8 2.5,1101.1 0.0,1101.7
M85.0,941.7C83.1,946.9 76.1,963.6 73.3,973.3C70.6,983.1 70.6,990.0 68.3,1000.0C66.1,1010.0 62.2,1023.3 60.0,1033.3C57.8,1043.3 58.1,1050.6 55.0,1060.0C51.9,1069.4 47.2,1082.2 41.7,1090.0C36.1,1097.8 28.6,1102.9 21.7,1106.7C14.7,1110.4 3.6,1111.7 0.0,1112.7
M85.0,1021.7C83.1,1026.9 76.9,1043.6 73.3,1053.3C69.7,1063.1 67.8,1071.7 63.3,1080.0C58.9,1088.3 52.8,1096.7 46.7,1103.3C40.6,1110.0 32.8,1115.0 26.7,1120.0C20.6,1125.0 14.4,1130.3 10.0,1133.3C5.6,1136.4 1.7,1137.5 0.0,1138.3
M85.0,1058.3C82.8,1063.6 76.4,1081.4 71.7,1090.0C66.9,1098.6 62.5,1103.9 56.7,1110.0C50.8,1116.1 42.8,1120.6 36.7,1126.7C30.6,1132.8 25.0,1140.6 20.0,1146.7C15.0,1152.8 10.0,1159.4 6.7,1163.3C3.3,1167.2 1.1,1168.9 0.0,1170.0
M85.0,1098.3C81.9,1101.9 73.1,1113.6 66.7,1120.0C60.3,1126.4 52.8,1130.6 46.7,1136.7C40.6,1142.8 34.4,1149.4 30.0,1156.7C25.6,1163.9 23.3,1173.3 20.0,1180.0C16.7,1186.7 13.3,1192.8 10.0,1196.7C6.7,1200.6 1.7,1202.2 0.0,1203.3
M85.0,1130.0C82.5,1132.8 75.3,1141.1 70.0,1146.7C64.7,1152.2 58.3,1157.2 53.3,1163.3C48.3,1169.4 43.9,1176.7 40.0,1183.3C36.1,1190.0 32.2,1198.3 30.0,1203.3C27.8,1208.3 27.2,1211.7 26.7,1213.3
M85.0,1163.3C82.8,1166.1 75.8,1173.9 71.7,1180.0C67.5,1186.1 62.8,1194.4 60.0,1200.0C57.2,1205.6 55.8,1211.1 55.0,1213.3
M85.0,1211.7C81.9,1215.3 71.4,1225.3 66.7,1233.3C61.9,1241.4 61.1,1252.8 56.7,1260.0C52.2,1267.2 45.0,1270.6 40.0,1276.7C35.0,1282.8 29.4,1290.6 26.7,1296.7C23.9,1302.8 25.6,1309.2 23.3,1313.3C21.1,1317.5 16.7,1321.7 13.3,1321.7C10.0,1321.7 5.6,1316.9 3.3,1313.3C1.1,1309.7 0.6,1302.2 0.0,1300.0
M85.0,1248.3C81.9,1251.9 70.6,1263.6 66.7,1270.0C62.8,1276.4 63.3,1279.4 61.7,1286.7C60.0,1293.9 59.7,1303.9 56.7,1313.3C53.6,1322.8 47.2,1333.9 43.3,1343.3C39.4,1352.8 34.4,1360.6 33.3,1370.0C32.2,1379.4 34.4,1391.7 36.7,1400.0C38.9,1408.3 44.4,1412.2 46.7,1420.0C48.9,1427.8 50.0,1437.8 50.0,1446.7C50.0,1455.6 48.1,1465.6 46.7,1473.3C45.3,1481.1 41.7,1485.6 41.7,1493.3C41.7,1501.1 44.7,1511.1 46.7,1520.0C48.6,1528.9 51.7,1537.2 53.3,1546.7C55.0,1556.1 54.4,1566.7 56.7,1576.7C58.9,1586.7 63.9,1597.2 66.7,1606.7C69.4,1616.1 70.3,1622.8 73.3,1633.3C76.4,1643.9 83.1,1663.9 85.0,1670.0
M85.0,1285.0C84.2,1288.6 81.3,1298.6 80.0,1306.7C78.7,1314.7 79.6,1324.4 77.3,1333.3C75.1,1342.2 69.0,1351.1 66.7,1360.0C64.3,1368.9 63.1,1377.8 63.3,1386.7C63.6,1395.6 66.9,1404.4 68.3,1413.3C69.7,1422.2 71.9,1431.1 71.7,1440.0C71.4,1448.9 68.3,1458.3 66.7,1466.7C65.0,1475.0 61.9,1481.7 61.7,1490.0C61.4,1498.3 63.3,1507.2 65.0,1516.7C66.7,1526.1 68.3,1537.8 71.7,1546.7C75.0,1555.6 82.8,1566.1 85.0,1570.0
M0.0,1340.0C1.1,1343.3 5.0,1353.9 6.7,1360.0C8.3,1366.1 10.6,1371.9 10.0,1376.7C9.4,1381.4 5.0,1386.1 3.3,1388.3C1.7,1390.6 0.6,1389.7 0.0,1390.0
M0.0,1416.7C1.7,1419.4 6.7,1427.2 10.0,1433.3C13.3,1439.4 17.2,1446.1 20.0,1453.3C22.8,1460.6 24.4,1468.9 26.7,1476.7C28.9,1484.4 31.1,1491.1 33.3,1500.0C35.6,1508.9 38.1,1520.0 40.0,1530.0C41.9,1540.0 43.3,1550.6 45.0,1560.0C46.7,1569.4 47.5,1577.2 50.0,1586.7C52.5,1596.1 57.2,1606.7 60.0,1616.7C62.8,1626.7 64.2,1636.7 66.7,1646.7C69.2,1656.7 72.5,1669.2 75.0,1676.7C77.5,1684.2 80.4,1689.2 81.4,1691.7
M0.0,1500.0C1.7,1504.4 7.3,1517.8 10.0,1526.7C12.7,1535.6 14.4,1543.9 16.0,1553.3C17.6,1562.8 17.6,1573.3 19.3,1583.3C21.1,1593.3 24.4,1603.3 26.7,1613.3C28.9,1623.3 30.8,1633.3 32.7,1643.3C34.5,1653.3 36.4,1665.3 37.7,1673.3C38.9,1681.4 39.9,1688.6 40.3,1691.7
M0.0,1476.7C1.9,1482.2 8.4,1500.0 11.7,1510.0C14.9,1520.0 17.1,1527.2 19.3,1536.7C21.6,1546.1 23.3,1557.2 25.0,1566.7C26.7,1576.1 27.4,1583.9 29.3,1593.3C31.3,1602.8 34.4,1613.9 36.7,1623.3C38.9,1632.8 40.7,1641.1 42.7,1650.0C44.6,1658.9 46.7,1669.7 48.3,1676.7C49.9,1683.6 51.7,1689.2 52.3,1691.7
M0.0,1666.7C0.4,1668.9 2.0,1675.8 2.7,1680.0C3.3,1684.2 3.8,1689.7 4.0,1691.7
M0.0,1536.7C1.1,1541.1 5.0,1553.9 6.7,1563.3C8.3,1572.8 8.1,1583.3 10.0,1593.3C11.9,1603.3 16.0,1612.8 18.3,1623.3C20.7,1633.9 22.2,1646.1 24.0,1656.7C25.8,1667.2 28.3,1680.8 29.3,1686.7C30.4,1692.5 30.2,1690.8 30.3,1691.7
M0.0,1583.3C1.1,1587.8 4.6,1600.0 6.7,1610.0C8.8,1620.0 10.7,1632.2 12.7,1643.3C14.6,1654.4 17.1,1668.6 18.3,1676.7C19.6,1684.7 19.9,1689.2 20.2,1691.7
M2776.7,258.7C2779.4,261.7 2789.7,270.9 2793.3,276.7C2796.9,282.4 2797.2,285.6 2798.3,293.3C2799.4,301.1 2798.1,313.3 2800.0,323.3C2801.9,333.3 2807.2,342.8 2810.0,353.3C2812.8,363.9 2813.9,375.6 2816.7,386.7C2819.4,397.8 2823.9,408.9 2826.7,420.0C2829.4,431.1 2831.4,442.2 2833.3,453.3C2835.3,464.4 2836.9,475.6 2838.3,486.7C2839.7,497.8 2841.3,511.1 2841.7,520.0C2842.0,528.9 2840.6,536.7 2840.3,540.0
M2776.7,330.7C2778.3,334.4 2784.2,345.1 2786.7,353.3C2789.2,361.6 2788.9,370.6 2791.7,380.0C2794.4,389.4 2799.7,400.0 2803.3,410.0C2806.9,420.0 2810.8,429.4 2813.3,440.0C2815.8,450.6 2817.2,462.2 2818.3,473.3C2819.4,484.4 2819.9,495.6 2820.0,506.7C2820.1,517.8 2818.9,534.4 2818.7,540.0
M2776.7,398.0C2778.9,401.7 2786.7,411.9 2790.0,420.0C2793.3,428.1 2795.6,436.7 2796.7,446.7C2797.8,456.7 2797.2,468.9 2796.7,480.0C2796.1,491.1 2794.1,503.3 2793.3,513.3C2792.6,523.3 2792.2,535.6 2792.0,540.0
M2860.0,200.0C2856.7,201.1 2845.6,203.9 2840.0,206.7C2834.4,209.4 2828.9,212.2 2826.7,216.7C2824.4,221.1 2825.0,226.1 2826.7,233.3C2828.3,240.6 2834.2,250.6 2836.7,260.0C2839.2,269.4 2840.0,280.0 2841.7,290.0C2843.3,300.0 2846.1,310.6 2846.7,320.0C2847.2,329.4 2843.9,337.8 2845.0,346.7C2846.1,355.6 2850.8,365.6 2853.3,373.3C2855.8,381.1 2858.9,390.0 2860.0,393.3
M2860.0,190.0C2855.6,191.1 2840.6,193.9 2833.3,196.7C2826.1,199.4 2819.7,202.2 2816.7,206.7C2813.6,211.1 2813.9,216.1 2815.0,223.3C2816.1,230.6 2820.3,240.6 2823.3,250.0C2826.4,259.4 2830.8,269.4 2833.3,280.0C2835.8,290.6 2836.9,303.3 2838.3,313.3C2839.7,323.3 2840.3,331.1 2841.7,340.0C2843.1,348.9 2843.6,354.4 2846.7,366.7C2849.7,378.9 2857.8,405.6 2860.0,413.3
M2776.7,633.3C2778.3,635.6 2784.2,641.7 2786.7,646.7C2789.2,651.7 2788.9,657.8 2791.7,663.3C2794.4,668.9 2799.2,675.8 2803.3,680.0C2807.5,684.2 2811.9,686.4 2816.7,688.3C2821.4,690.3 2827.2,689.7 2831.7,691.7C2836.1,693.6 2839.7,696.7 2843.3,700.0C2846.9,703.3 2850.4,708.5 2853.3,711.7C2856.2,714.9 2859.6,717.9 2860.8,719.2
M2776.7,668.3C2778.1,670.6 2781.4,677.8 2785.0,681.7C2788.6,685.6 2793.1,687.8 2798.3,691.7C2803.6,695.6 2811.4,700.8 2816.7,705.0C2821.9,709.2 2825.6,712.5 2830.0,716.7C2834.4,720.8 2839.4,727.1 2843.3,730.0C2847.2,732.9 2850.4,732.4 2853.3,734.2C2856.2,736.0 2859.6,739.7 2860.8,740.8
M2776.7,690.8C2779.2,692.9 2786.7,699.0 2791.7,703.3C2796.7,707.6 2801.9,712.2 2806.7,716.7C2811.4,721.1 2815.0,726.1 2820.0,730.0C2825.0,733.9 2831.7,737.2 2836.7,740.0C2841.7,742.8 2846.0,744.0 2850.0,746.7C2854.0,749.3 2859.0,754.3 2860.8,755.8
M2791.7,540.0C2791.9,542.8 2792.2,550.3 2793.3,556.7C2794.4,563.1 2795.6,570.6 2798.3,578.3C2801.1,586.1 2805.3,595.0 2810.0,603.3C2814.7,611.7 2820.8,620.8 2826.7,628.3C2832.5,635.8 2839.3,642.9 2845.0,648.3C2850.7,653.8 2858.2,658.8 2860.8,660.8
M2815.8,540.0C2816.1,543.6 2816.7,554.4 2817.5,561.7C2818.3,568.9 2820.4,578.9 2820.8,583.3C2821.2,587.8 2819.3,586.4 2820.0,588.3C2820.7,590.3 2823.6,592.5 2825.0,595.0C2826.4,597.5 2826.4,600.3 2828.3,603.3C2830.3,606.4 2833.9,610.0 2836.7,613.3C2839.4,616.7 2842.5,621.1 2845.0,623.3C2847.5,625.6 2849.0,625.6 2851.7,626.7C2854.3,627.8 2859.3,629.4 2860.8,630.0
M2840.0,540.0C2840.0,543.1 2839.2,552.8 2840.0,558.3C2840.8,563.9 2843.9,568.1 2845.0,573.3C2846.1,578.6 2845.3,585.3 2846.7,590.0C2848.1,594.7 2851.0,598.5 2853.3,601.7C2855.7,604.9 2859.6,607.9 2860.8,609.2
M2776.7,745.3C2778.9,746.7 2784.7,750.3 2790.0,753.3C2795.3,756.3 2802.2,759.7 2808.3,763.3C2814.4,766.9 2820.8,771.1 2826.7,775.0C2832.5,778.9 2838.9,783.1 2843.3,786.7C2847.8,790.3 2850.6,793.9 2853.3,796.7C2856.1,799.4 2858.8,801.7 2860.0,803.3C2861.2,805.0 2860.7,806.1 2860.8,806.7
M2776.7,764.7C2777.8,764.9 2780.3,764.4 2783.3,765.8C2786.4,767.3 2790.3,770.7 2795.0,773.3C2799.7,776.0 2806.1,778.6 2811.7,781.7C2817.2,784.7 2823.6,788.1 2828.3,791.7C2833.1,795.3 2836.7,799.2 2840.0,803.3C2843.3,807.5 2844.9,812.8 2848.3,816.7C2851.8,820.6 2858.8,825.0 2860.8,826.7
M2776.7,782.0C2778.3,782.5 2783.6,783.7 2786.7,785.0C2789.7,786.3 2793.1,788.3 2795.0,790.0C2796.9,791.7 2796.5,792.8 2798.3,795.0C2800.1,797.2 2802.5,800.3 2805.8,803.3C2809.2,806.4 2813.8,810.0 2818.3,813.3C2822.9,816.7 2828.9,819.2 2833.3,823.3C2837.8,827.5 2840.4,833.6 2845.0,838.3C2849.6,843.1 2858.2,849.4 2860.8,851.7
M2776.7,844.7C2779.4,846.1 2788.3,849.7 2793.3,853.3C2798.3,857.0 2804.0,862.5 2806.7,866.7C2809.3,870.8 2810.4,875.7 2809.3,878.3C2808.2,881.0 2805.4,882.6 2800.0,882.7C2794.6,882.8 2780.6,879.6 2776.7,879.0
M2776.7,928.0C2780.6,928.8 2791.7,931.7 2800.0,932.7C2808.3,933.7 2816.4,934.2 2826.7,934.0C2836.9,933.8 2855.8,932.1 2861.7,931.7
M2776.7,949.7C2781.1,950.6 2793.9,953.8 2803.3,955.0C2812.8,956.2 2823.6,956.5 2833.3,956.7C2843.1,956.8 2856.9,956.1 2861.7,956.0
M2776.7,969.0C2781.7,969.7 2797.2,971.9 2806.7,973.3C2816.1,974.7 2824.2,975.9 2833.3,977.3C2842.5,978.8 2856.9,981.2 2861.7,982.0
M2776.7,1012.7C2781.7,1012.8 2797.2,1012.9 2806.7,1013.3C2816.1,1013.7 2824.2,1013.2 2833.3,1015.0C2842.5,1016.8 2856.9,1022.5 2861.7,1024.0
M2776.7,1031.3C2779.4,1032.2 2788.3,1034.9 2793.3,1036.7C2798.3,1038.4 2801.7,1040.8 2806.7,1041.7C2811.7,1042.5 2816.7,1040.3 2823.3,1041.7C2830.0,1043.1 2840.3,1046.7 2846.7,1050.0C2853.1,1053.3 2859.2,1059.4 2861.7,1061.3
M2776.7,1066.3C2779.4,1066.9 2787.8,1068.0 2793.3,1070.0C2798.9,1072.0 2805.0,1076.7 2810.0,1078.3C2815.0,1080.0 2819.4,1077.2 2823.3,1080.0C2827.2,1082.8 2831.4,1087.8 2833.3,1095.0C2835.3,1102.2 2834.2,1113.1 2835.0,1123.3C2835.8,1133.6 2839.2,1145.6 2838.3,1156.7C2837.5,1167.8 2832.5,1180.6 2830.0,1190.0C2827.5,1199.4 2824.4,1209.4 2823.3,1213.3
M2823.3,1200.0C2822.2,1202.2 2819.4,1209.4 2816.7,1213.3C2813.9,1217.2 2810.6,1217.8 2806.7,1223.3C2802.8,1228.9 2798.3,1239.8 2793.3,1246.7C2788.3,1253.6 2779.4,1261.7 2776.7,1264.7
M2861.7,1200.0C2860.3,1203.3 2856.9,1212.2 2853.3,1220.0C2849.7,1227.8 2845.6,1238.3 2840.0,1246.7C2834.4,1255.0 2826.7,1263.3 2820.0,1270.0C2813.3,1276.7 2805.0,1280.6 2800.0,1286.7C2795.0,1292.8 2793.9,1300.3 2790.0,1306.7C2786.1,1313.1 2778.9,1321.9 2776.7,1325.0
M2861.7,1255.0C2859.2,1258.1 2851.4,1266.9 2846.7,1273.3C2841.9,1279.7 2837.8,1286.7 2833.3,1293.3C2828.9,1300.0 2824.4,1307.2 2820.0,1313.3C2815.6,1319.4 2810.3,1325.8 2806.7,1330.0C2803.1,1334.2 2800.0,1335.6 2798.3,1338.3C2796.7,1341.1 2798.3,1344.7 2796.7,1346.7C2795.0,1348.6 2791.7,1347.0 2788.3,1350.0C2785.0,1353.0 2778.6,1362.2 2776.7,1364.7
M2861.7,1349.3C2859.2,1350.6 2851.4,1353.2 2846.7,1356.7C2841.9,1360.1 2838.3,1365.6 2833.3,1370.0C2828.3,1374.4 2822.2,1378.3 2816.7,1383.3C2811.1,1388.3 2805.0,1394.4 2800.0,1400.0C2795.0,1405.6 2790.6,1410.8 2786.7,1416.7C2782.8,1422.6 2778.3,1432.2 2776.7,1435.3
M2861.7,1372.3C2858.1,1374.7 2845.8,1382.1 2840.0,1386.7C2834.2,1391.3 2830.6,1395.6 2826.7,1400.0C2822.8,1404.4 2820.6,1408.9 2816.7,1413.3C2812.8,1417.8 2807.2,1421.1 2803.3,1426.7C2799.4,1432.2 2797.8,1440.9 2793.3,1446.7C2788.9,1452.4 2779.4,1458.9 2776.7,1461.3
M2861.7,1399.0C2859.2,1400.8 2850.8,1406.5 2846.7,1410.0C2842.5,1413.5 2839.4,1416.7 2836.7,1420.0C2833.9,1423.3 2833.3,1426.1 2830.0,1430.0C2826.7,1433.9 2821.1,1438.9 2816.7,1443.3C2812.2,1447.8 2806.7,1452.2 2803.3,1456.7C2800.0,1461.1 2801.1,1466.0 2796.7,1470.0C2792.2,1474.0 2780.0,1478.9 2776.7,1480.7
M2861.7,1463.3C2860.3,1466.7 2856.9,1477.2 2853.3,1483.3C2849.7,1489.4 2845.6,1495.0 2840.0,1500.0C2834.4,1505.0 2826.7,1508.9 2820.0,1513.3C2813.3,1517.8 2807.2,1523.6 2800.0,1526.7C2792.8,1529.8 2780.6,1531.1 2776.7,1532.0
M2861.7,1515.7C2858.1,1518.1 2846.9,1525.4 2840.0,1530.0C2833.1,1534.6 2825.6,1539.4 2820.0,1543.3C2814.4,1547.2 2810.0,1550.3 2806.7,1553.3C2803.3,1556.4 2805.0,1558.5 2800.0,1561.7C2795.0,1564.8 2780.6,1570.6 2776.7,1572.3
M2861.7,1545.7C2858.1,1547.8 2846.9,1554.0 2840.0,1558.3C2833.1,1562.7 2826.7,1567.2 2820.0,1571.7C2813.3,1576.1 2806.1,1580.8 2800.0,1585.0C2793.9,1589.2 2787.2,1594.4 2783.3,1596.7C2779.4,1598.9 2777.8,1598.3 2776.7,1598.7
M2861.7,1602.3C2859.2,1603.6 2851.9,1606.8 2846.7,1610.0C2841.4,1613.2 2835.0,1619.2 2830.0,1621.7C2825.0,1624.2 2821.7,1623.6 2816.7,1625.0C2811.7,1626.4 2806.7,1627.7 2800.0,1630.0C2793.3,1632.3 2780.6,1637.2 2776.7,1638.7
M2861.7,1620.7C2858.1,1623.3 2846.9,1632.9 2840.0,1636.7C2833.1,1640.4 2826.7,1640.6 2820.0,1643.3C2813.3,1646.1 2807.2,1649.9 2800.0,1653.3C2792.8,1656.8 2780.6,1662.2 2776.7,1664.0
M2861.7,1645.7C2859.2,1647.5 2852.5,1654.0 2846.7,1656.7C2840.8,1659.3 2833.9,1658.9 2826.7,1661.7C2819.4,1664.4 2811.7,1669.3 2803.3,1673.3C2795.0,1677.3 2781.1,1683.6 2776.7,1685.7
M121.7,0.0C124.0,0.4 129.1,1.7 135.6,2.5C142.1,3.4 152.4,4.7 160.8,5.0C169.2,5.4 178.0,5.3 186.0,4.4C194.0,3.6 204.9,0.7 208.7,0.0
M70.0,0.0C71.5,1.3 75.3,4.8 78.8,7.6C82.4,10.3 87.2,14.0 91.5,16.4C95.7,18.8 99.9,20.5 104.1,22.1C108.3,23.6 111.8,23.4 116.7,25.8C121.5,28.3 127.8,33.7 133.0,36.6C138.3,39.4 143.6,40.8 148.2,42.9C152.8,45.0 157.8,47.5 160.8,49.2C163.7,50.8 164.4,52.3 165.8,52.9C167.3,53.6 167.3,54.0 169.6,52.9C171.9,51.9 174.9,49.2 179.7,46.6C184.5,44.1 192.3,40.5 198.6,37.8C204.9,35.1 211.2,33.4 217.5,30.3C223.8,27.1 231.6,22.3 236.4,18.9C241.2,15.5 243.8,13.2 246.5,10.1C249.2,6.9 251.8,1.7 252.8,0.0
M54.9,0.0C56.4,2.5 59.7,10.5 63.7,15.1C67.7,19.7 73.2,23.3 78.8,27.7C84.5,32.1 92.7,38.2 97.8,41.6C102.8,45.0 106.4,45.8 109.1,47.9C111.8,50.0 111.8,52.6 114.1,54.2C116.5,55.8 119.4,56.6 123.0,57.4C126.5,58.1 130.7,57.3 135.6,58.6C140.4,60.0 148.8,63.6 152.0,65.5C155.1,67.5 153.4,68.7 154.5,70.6C155.5,72.5 157.5,75.2 158.3,76.9C159.0,78.6 158.0,79.7 158.9,80.7C159.7,81.6 160.9,83.4 163.3,82.6C165.7,81.7 168.6,78.9 173.4,75.6C178.2,72.4 184.9,67.2 192.3,63.0C199.6,58.8 209.1,54.6 217.5,50.4C225.9,46.2 235.4,41.6 242.7,37.8C250.1,34.0 255.7,30.9 261.6,27.7C267.5,24.6 270.5,23.2 278.0,18.9C285.5,14.6 300.8,5.2 306.6,2.0C312.4,-1.2 311.6,0.3 312.6,0.0
M34.7,0.0C36.8,2.9 42.5,11.6 47.3,17.6C52.2,23.7 58.5,31.3 63.7,36.6C69.0,41.8 73.2,45.4 78.8,49.2C84.5,52.9 91.5,56.1 97.8,59.2C104.1,62.4 110.8,64.9 116.7,68.1C122.5,71.2 128.8,74.4 133.0,78.2C137.3,81.9 139.8,87.0 141.9,90.8C144.0,94.5 145.1,97.1 145.7,100.8C146.2,104.6 145.0,111.7 145.0,113.5C145.1,115.2 145.7,110.3 145.9,111.4C146.0,112.5 145.3,117.6 145.9,120.0C146.5,122.4 147.9,125.2 149.4,125.7C151.0,126.2 153.0,125.0 155.1,122.9C157.3,120.7 158.7,116.9 162.3,112.9C165.9,108.8 170.9,103.6 176.6,98.6C182.3,93.6 189.7,86.7 196.6,82.9C203.5,79.0 209.7,79.5 218.0,75.7C226.3,71.9 237.8,64.3 246.6,60.0C255.4,55.7 263.5,55.0 270.9,50.0C278.2,45.0 279.8,34.9 290.4,30.3C301.1,25.6 322.7,23.3 334.8,22.2C346.9,21.0 351.6,21.7 363.0,23.4C374.5,25.1 389.9,28.1 403.4,32.3C416.8,36.4 430.3,42.0 443.7,48.4C457.2,54.8 472.0,65.6 484.1,70.6C496.2,75.6 502.9,77.7 516.3,78.7C529.8,79.7 547.3,79.0 564.7,76.6C582.2,74.3 602.4,69.2 621.2,64.5C640.0,59.8 664.2,53.1 677.7,48.4C691.1,43.7 696.2,41.7 701.9,36.3C707.6,30.9 709.6,22.2 712.0,16.1C714.3,10.1 715.3,2.7 716.0,0.0
M-22.0,2.5C-19.9,5.3 -13.6,14.5 -9.4,18.9C-5.2,23.3 -0.4,25.2 3.2,29.0C6.8,32.8 9.3,37.0 12.0,41.6C14.8,46.2 16.4,51.7 19.6,56.7C22.7,61.8 26.3,67.0 30.9,71.9C35.6,76.7 41.4,81.9 47.3,85.7C53.2,89.5 59.9,92.2 66.2,94.5C72.5,96.9 80.5,97.5 85.1,99.6C89.8,101.7 91.7,104.6 94.0,107.1C96.3,109.7 97.2,111.4 99.0,114.7C100.9,118.0 103.8,122.9 105.1,127.1C106.5,131.4 107.4,135.7 107.3,140.0C107.2,144.3 104.7,148.8 104.4,152.9C104.2,156.9 104.5,160.5 105.9,164.3C107.2,168.1 110.5,172.4 112.3,175.7C114.1,179.0 115.6,181.7 116.6,184.3C117.5,186.9 117.8,190.2 118.0,191.4
M-22.0,46.6C-19.9,48.1 -13.0,52.5 -9.4,55.5C-5.8,58.4 -3.1,60.5 -0.6,64.3C2.0,68.1 4.1,74.2 5.7,78.2C7.4,82.1 6.8,84.7 9.5,88.2C12.2,91.8 17.3,96.2 22.1,99.6C27.0,102.9 34.1,105.9 38.5,108.4C42.9,110.9 43.7,111.7 48.6,114.7C53.5,117.7 63.8,123.4 68.0,126.4C72.2,129.5 71.9,130.1 73.7,132.9C75.5,135.6 78.0,139.3 78.7,142.9C79.4,146.4 77.9,150.5 78.0,154.3C78.1,158.1 78.0,162.6 79.4,165.7C80.9,168.8 84.9,169.8 86.6,172.9C88.2,176.0 88.8,181.2 89.4,184.3C90.0,187.4 90.0,190.2 90.1,191.4
M-22.0,90.8C-20.1,91.9 -13.8,95.0 -10.7,97.7C-7.5,100.4 -5.4,104.8 -3.1,107.1C-0.8,109.5 1.1,110.8 3.2,111.6C5.3,112.3 6.8,110.4 9.5,111.6C12.2,112.7 14.5,113.6 19.6,118.5C24.7,123.4 33.8,133.9 40.0,141.0C46.2,148.1 53.1,154.9 56.5,161.0C59.9,167.1 60.5,172.7 60.5,177.5C60.5,182.3 57.2,187.9 56.5,190.0
M282.4,24.2C289.1,21.5 309.3,11.4 322.7,8.1C336.2,4.7 349.6,3.4 363.0,4.0C376.5,4.7 389.9,7.7 403.4,12.1C416.8,16.5 431.0,24.2 443.7,30.3C456.5,36.3 467.3,43.7 480.0,48.4C492.8,53.1 506.3,57.1 520.4,58.5C534.5,59.8 547.9,58.5 564.7,56.5C581.6,54.5 603.7,50.4 621.2,46.4C638.7,42.4 657.5,37.3 669.6,32.3C681.7,27.2 688.4,21.5 693.8,16.1C699.2,10.8 700.6,2.7 701.9,0.0
M419.5,0.0C423.6,3.4 433.0,13.8 443.7,20.2C454.5,26.6 470.6,34.3 484.1,38.3C497.5,42.4 511.0,43.2 524.4,44.4C537.9,45.5 551.3,46.5 564.7,45.2C578.2,43.8 593.0,40.5 605.1,36.3C617.2,32.1 630.6,26.2 637.4,20.2C644.1,14.1 644.1,3.4 645.4,0.0
M826.6,184.9C826.1,182.7 823.4,177.6 823.9,172.1C824.3,166.6 826.8,158.2 829.2,151.9C831.7,145.7 834.4,140.5 838.7,134.5C842.9,128.4 849.4,121.5 854.8,115.6C860.2,109.8 866.2,104.0 870.9,99.5C875.6,95.0 880.6,92.8 883.0,88.7C885.5,84.7 885.3,80.2 885.7,75.3C886.2,70.4 884.4,63.9 885.7,59.2C887.1,54.5 890.0,50.3 893.8,47.1C897.6,43.8 903.0,41.6 908.6,39.7C914.2,37.8 922.5,37.8 927.4,35.6C932.3,33.5 933.4,28.0 938.2,26.9C942.9,25.8 950.5,28.2 955.6,28.9C960.8,29.6 963.9,31.7 969.1,30.9C974.2,30.1 981.4,27.1 986.6,24.2C991.7,21.3 998.1,15.2 1000.0,13.4C1001.9,11.7 996.2,15.2 997.8,13.4C999.5,11.7 1005.0,4.9 1009.9,2.7C1014.8,0.4 1024.5,0.4 1027.4,0.0
M852.1,180.8C853.2,178.3 855.7,170.0 858.8,165.4C862.0,160.8 866.0,157.1 870.9,153.3C875.9,149.5 882.6,145.9 888.4,142.5C894.2,139.2 901.2,136.7 905.9,133.1C910.6,129.5 915.1,125.7 916.6,121.0C918.2,116.3 915.1,110.5 915.3,104.9C915.5,99.3 916.2,93.0 918.0,87.4C919.8,81.8 922.0,75.5 926.1,71.3C930.1,67.0 936.1,63.5 942.2,61.8C948.2,60.2 955.6,61.8 962.4,61.2C969.1,60.5 976.2,59.7 982.5,57.8C988.8,55.9 996.3,52.0 1000.0,49.7C1003.7,47.5 1000.0,46.4 1004.5,44.4C1009.1,42.4 1019.1,40.3 1027.4,37.6C1035.7,35.0 1045.3,30.4 1054.3,28.2C1063.2,26.1 1070.0,25.4 1081.2,24.9C1092.4,24.3 1110.3,24.2 1121.5,24.9C1132.7,25.5 1138.3,26.3 1148.4,28.9C1158.5,31.5 1171.9,36.6 1182.0,40.3C1192.1,44.0 1202.2,47.3 1208.9,51.1C1215.6,54.9 1218.3,60.6 1222.4,63.2C1226.4,65.8 1231.1,66.8 1233.1,66.6C1235.1,66.3 1235.8,66.2 1234.5,61.8C1233.1,57.5 1227.3,47.3 1225.0,40.3C1222.8,33.4 1223.2,26.9 1221.0,20.2C1218.8,13.4 1213.2,3.4 1211.6,0.0
M942.2,187.6C944.0,184.5 950.0,176.9 952.9,169.4C955.9,161.9 956.8,150.1 959.7,142.5C962.6,134.9 966.4,128.4 970.4,123.7C974.5,119.0 978.9,116.5 983.9,114.3C988.8,112.0 997.5,110.8 1000.0,110.3C1002.5,109.7 997.3,112.7 999.2,110.9C1001.0,109.1 1007.7,102.5 1011.3,99.5C1014.8,96.5 1015.7,95.9 1020.7,92.8C1025.6,89.6 1035.2,84.0 1040.8,80.7C1046.4,77.3 1050.5,75.3 1054.3,72.6C1058.1,69.9 1060.3,66.1 1063.7,64.5C1067.1,63.0 1068.2,63.2 1074.5,63.2C1080.7,63.2 1091.3,63.2 1101.3,64.5C1111.4,65.9 1126.0,68.1 1135.0,71.3C1143.9,74.4 1148.4,78.7 1155.1,83.4C1161.8,88.1 1168.6,94.8 1175.3,99.5C1182.0,104.2 1187.6,108.0 1195.5,111.6C1203.3,115.2 1214.5,117.9 1222.4,121.0C1230.2,124.1 1236.2,128.0 1242.5,130.4C1248.8,132.9 1253.6,134.3 1260.0,135.8C1266.4,137.3 1273.3,139.6 1280.8,139.2C1288.3,138.7 1303.6,139.5 1305.0,133.1C1306.3,126.7 1294.2,112.3 1288.8,100.8C1283.5,89.4 1278.1,76.0 1272.7,64.5C1267.3,53.1 1260.6,43.0 1256.6,32.3C1252.5,21.5 1249.9,5.4 1248.5,0.0
M967.7,187.6C969.1,183.2 973.8,168.0 975.8,161.3C977.8,154.7 976.9,152.6 979.8,147.9C982.7,143.2 989.9,136.5 993.3,133.1C996.6,129.7 999.5,128.4 1000.0,127.7C1000.5,127.1 994.1,130.0 996.5,129.1C998.8,128.2 1009.0,125.3 1013.9,122.4C1018.9,119.4 1021.3,114.7 1026.1,111.6C1030.8,108.5 1036.4,106.7 1042.2,103.5C1048.0,100.4 1056.1,95.7 1061.0,92.8C1065.9,89.9 1067.3,87.4 1071.8,86.1C1076.2,84.7 1081.8,84.7 1087.9,84.7C1093.9,84.7 1102.5,84.5 1108.1,86.1C1113.7,87.6 1115.9,91.2 1121.5,94.1C1127.1,97.0 1135.0,99.9 1141.7,103.5C1148.4,107.1 1155.1,112.0 1161.8,115.6C1168.6,119.2 1174.2,121.5 1182.0,125.0C1189.9,128.6 1199.9,133.9 1208.9,137.1C1217.9,140.4 1227.3,142.6 1235.8,144.5C1244.3,146.4 1252.5,146.9 1260.0,148.6C1267.5,150.2 1274.0,153.4 1280.8,154.5C1287.6,155.6 1296.6,157.5 1300.9,155.3C1305.3,153.1 1307.7,147.6 1307.0,141.2C1306.3,134.8 1298.6,121.0 1296.9,117.0
M991.9,187.6C993.3,183.9 998.8,168.6 1000.0,165.4C1001.2,162.1 998.4,170.1 999.2,168.1C999.9,166.1 1001.8,157.1 1004.5,153.3C1007.2,149.5 1010.8,147.7 1015.3,145.2C1019.8,142.7 1026.9,141.6 1031.4,138.5C1035.9,135.4 1037.7,130.6 1042.2,126.4C1046.7,122.1 1052.9,116.8 1058.3,112.9C1063.7,109.1 1069.5,105.7 1074.5,103.5C1079.4,101.4 1083.4,100.5 1087.9,100.2C1092.4,99.8 1095.7,100.1 1101.3,101.5C1106.9,103.0 1114.8,106.1 1121.5,108.9C1128.2,111.7 1135.0,115.0 1141.7,118.3C1148.4,121.7 1155.1,125.5 1161.8,129.1C1168.6,132.7 1174.2,136.0 1182.0,139.8C1189.9,143.6 1199.9,148.3 1208.9,151.9C1217.9,155.5 1227.3,158.7 1235.8,161.3C1244.3,164.0 1252.5,165.0 1260.0,168.1C1267.5,171.1 1274.6,175.9 1280.8,179.5C1286.9,183.2 1294.2,188.2 1296.9,190.0
M1055.6,187.6C1057.6,184.8 1062.4,175.6 1067.7,170.8C1073.1,165.9 1081.2,161.3 1087.9,158.7C1094.6,156.0 1101.3,155.1 1108.1,154.6C1114.8,154.2 1121.5,154.8 1128.2,156.0C1135.0,157.1 1141.7,158.9 1148.4,161.3C1155.1,163.8 1161.6,166.4 1168.6,170.8C1175.5,175.1 1186.5,184.8 1190.1,187.6
M1091.9,187.6C1094.6,185.9 1102.0,179.4 1108.1,177.5C1114.1,175.6 1121.5,175.7 1128.2,176.1C1135.0,176.6 1142.4,178.3 1148.4,180.2C1154.5,182.1 1161.8,186.3 1164.5,187.6
M165.0,190.0C166.2,185.8 168.7,173.0 172.0,165.0C175.3,157.0 179.5,148.7 185.0,142.0C190.5,135.3 196.7,130.7 205.0,125.0C213.3,119.3 223.3,114.2 235.0,108.0C246.7,101.8 260.8,94.0 275.0,88.0C289.2,82.0 305.0,76.3 320.0,72.0C335.0,67.7 351.2,63.0 365.0,62.0C378.8,61.0 390.0,61.8 403.0,66.0C416.0,70.2 429.5,79.7 443.0,87.0C456.5,94.3 471.2,104.8 484.0,110.0C496.8,115.2 506.5,117.5 520.0,118.0C533.5,118.5 546.7,115.0 565.0,113.0C583.3,111.0 610.8,107.7 630.0,106.0C649.2,104.3 669.9,103.8 680.0,102.9C690.1,101.9 686.7,102.1 690.8,100.2C694.8,98.3 699.3,95.1 704.2,91.4C709.1,87.7 715.0,82.0 720.3,78.0C725.7,73.9 732.0,70.4 736.5,67.2C741.0,64.1 744.5,62.3 747.2,59.2C749.9,56.0 751.5,52.7 752.6,48.4C753.7,44.1 753.5,37.9 753.9,33.6C754.4,29.4 753.7,26.4 755.3,22.9C756.9,19.3 760.0,15.9 763.4,12.1C766.7,8.3 773.4,2.0 775.5,0.0
M183.0,190.0C184.2,186.3 186.7,175.0 190.0,168.0C193.3,161.0 197.2,154.3 203.0,148.0C208.8,141.7 216.3,135.8 225.0,130.0C233.7,124.2 244.2,118.3 255.0,113.0C265.8,107.7 277.5,102.7 290.0,98.0C302.5,93.3 317.5,88.2 330.0,85.0C342.5,81.8 352.8,79.3 365.0,79.0C377.2,78.7 390.0,79.0 403.0,83.0C416.0,87.0 429.5,95.7 443.0,103.0C456.5,110.3 470.5,121.7 484.0,127.0C497.5,132.3 509.7,134.2 524.0,135.0C538.3,135.8 552.3,133.5 570.0,132.0C587.7,130.5 611.7,127.3 630.0,126.0C648.3,124.7 669.4,125.0 680.0,124.4C690.6,123.8 687.8,124.0 693.4,122.4C699.0,120.7 706.9,117.9 713.6,114.3C720.3,110.7 727.7,105.5 733.8,100.8C739.8,96.1 745.4,90.3 749.9,86.1C754.4,81.8 758.2,78.9 760.7,75.3C763.1,71.7 764.1,68.6 764.7,64.5C765.3,60.5 763.6,55.6 764.0,51.1C764.5,46.6 765.3,41.7 767.4,37.6C769.5,33.6 773.9,31.1 776.8,26.9C779.7,22.6 782.2,16.6 784.9,12.1C787.6,7.6 791.6,2.0 792.9,0.0
M212.0,190.0C213.7,187.0 217.3,177.8 222.0,172.0C226.7,166.2 233.3,160.3 240.0,155.0C246.7,149.7 253.7,144.7 262.0,140.0C270.3,135.3 280.3,130.8 290.0,127.0C299.7,123.2 310.8,119.5 320.0,117.0C329.2,114.5 337.0,112.8 345.0,112.0C353.0,111.2 358.3,111.0 368.0,112.0C377.7,113.0 390.5,113.8 403.0,118.0C415.5,122.2 429.5,130.0 443.0,137.0C456.5,144.0 473.3,153.7 484.0,160.0C494.7,166.3 494.7,172.1 507.0,175.0C519.3,177.9 542.0,177.0 558.0,177.4C574.0,177.8 587.4,178.0 602.7,177.4C618.0,176.8 637.1,174.9 650.0,174.0C662.9,173.1 672.8,173.5 680.0,172.1C687.2,170.7 688.7,168.2 693.4,165.4C698.2,162.6 704.2,156.2 708.2,155.3C712.3,154.4 713.8,158.3 717.6,160.0C721.5,161.7 727.5,165.6 731.1,165.4C734.7,165.2 736.5,162.2 739.2,158.7C741.8,155.1 744.1,148.3 747.2,143.9C750.4,139.4 755.3,136.2 758.0,131.8C760.7,127.3 761.1,122.8 763.4,117.0C765.6,111.1 769.6,103.8 771.4,96.8C773.2,89.9 773.0,82.2 774.1,75.3C775.2,68.3 775.9,60.7 778.2,55.1C780.4,49.5 784.2,47.5 787.6,41.7C790.9,35.9 795.0,25.5 798.3,20.2C801.7,14.8 803.9,12.8 807.7,9.4C811.5,6.1 818.9,1.6 821.2,0.0
M286.0,187.0C287.0,183.3 288.3,171.5 292.0,165.0C295.7,158.5 301.3,151.8 308.0,148.0C314.7,144.2 323.0,142.5 332.0,142.0C341.0,141.5 351.3,142.8 362.0,145.0C372.7,147.2 384.7,150.8 396.0,155.0C407.3,159.2 420.7,164.7 430.0,170.0C439.3,175.3 448.3,184.2 452.0,187.0
M302.0,187.0C303.7,183.3 307.0,170.0 312.0,165.0C317.0,160.0 323.7,157.8 332.0,157.0C340.3,156.2 351.3,157.5 362.0,160.0C372.7,162.5 386.3,167.5 396.0,172.0C405.7,176.5 416.0,184.5 420.0,187.0
M320.0,187.0C322.5,184.5 328.0,174.0 335.0,172.0C342.0,170.0 353.7,172.5 362.0,175.0C370.3,177.5 381.2,185.0 385.0,187.0
M795.6,187.6C797.0,184.3 802.1,173.6 803.7,168.1C805.3,162.6 803.9,160.7 805.0,154.6C806.2,148.6 807.7,139.2 810.4,131.8C813.1,124.4 817.1,117.9 821.2,110.3C825.2,102.6 830.1,93.7 834.6,86.1C839.1,78.4 843.8,70.4 848.1,64.5C852.3,58.7 857.5,55.4 860.2,51.1C862.9,46.8 861.7,43.0 864.2,39.0C866.7,35.0 869.8,30.9 875.0,26.9C880.1,22.9 888.4,17.9 895.1,14.8C901.8,11.7 909.9,9.9 915.3,8.1C920.7,6.3 924.7,5.4 927.4,4.0C930.1,2.7 930.8,0.7 931.4,0.0
M1460.3,64.5C1462.0,63.2 1465.3,57.1 1470.4,56.5C1475.4,55.8 1483.8,57.1 1490.5,60.5C1497.3,63.9 1507.0,72.3 1510.7,76.6C1514.4,81.0 1514.7,85.4 1512.7,86.7C1510.7,88.1 1505.0,86.4 1498.6,84.7C1492.2,83.0 1480.6,79.2 1474.4,76.6C1468.2,74.1 1463.8,71.4 1461.5,69.4C1459.1,67.4 1460.5,65.3 1460.3,64.5
M1413.9,32.3C1417.3,28.9 1426.7,16.5 1434.1,12.1C1441.5,7.7 1449.5,6.1 1458.3,6.1C1467.0,6.1 1477.1,7.7 1486.5,12.1C1495.9,16.5 1505.3,24.9 1514.7,32.3C1524.2,39.7 1534.9,47.1 1543.0,56.5C1551.0,65.9 1559.5,79.3 1563.2,88.7C1566.8,98.2 1567.2,106.2 1565.2,112.9C1563.2,119.7 1558.1,125.1 1551.0,129.1C1544.0,133.1 1533.6,136.8 1522.8,137.2C1512.1,137.5 1498.6,134.5 1486.5,131.1C1474.4,127.7 1460.3,123.4 1450.2,117.0C1440.1,110.6 1432.4,102.2 1426.0,92.8C1419.6,83.4 1413.9,70.6 1411.9,60.5C1409.9,50.4 1413.6,37.0 1413.9,32.3
M1413.9,0.0C1411.2,2.4 1402.8,7.4 1397.8,14.1C1392.7,20.8 1386.0,30.6 1383.6,40.3C1381.3,50.1 1380.6,61.2 1383.6,72.6C1386.7,84.0 1393.4,96.8 1401.8,108.9C1410.2,121.0 1422.0,135.8 1434.1,145.2C1446.2,154.6 1461.0,161.7 1474.4,165.4C1487.9,169.1 1501.3,167.4 1514.7,167.4C1528.2,167.4 1544.3,167.1 1555.1,165.4C1565.8,163.7 1573.2,162.7 1579.3,157.3C1585.3,151.9 1590.4,143.2 1591.4,133.1C1592.4,123.0 1589.4,108.9 1585.3,96.8C1581.3,84.7 1574.2,71.3 1567.2,60.5C1560.1,49.8 1551.7,40.3 1543.0,32.3C1534.2,24.2 1522.1,17.5 1514.7,12.1C1507.3,6.7 1501.3,2.0 1498.6,0.0
M1046.8,0.0C1050.2,0.7 1059.6,4.0 1067.0,4.0C1074.4,4.0 1087.2,0.7 1091.2,0.0
M1282.8,0.0C1282.5,3.4 1279.1,13.4 1280.8,20.2C1282.5,26.9 1288.8,31.6 1292.9,40.3C1296.9,49.1 1302.3,63.2 1305.0,72.6C1307.7,82.0 1306.3,88.1 1309.0,96.8C1311.7,105.6 1316.4,116.3 1321.1,125.1C1325.8,133.8 1331.2,141.9 1337.3,149.3C1343.3,156.6 1350.0,162.6 1357.4,169.4C1364.8,176.2 1377.6,186.6 1381.6,190.0
M1321.1,0.0C1320.1,4.0 1314.7,15.5 1315.1,24.2C1315.4,32.9 1321.1,41.7 1323.1,52.4C1325.2,63.2 1324.5,77.3 1327.2,88.7C1329.9,100.2 1334.2,110.3 1339.3,121.0C1344.3,131.8 1351.0,143.9 1357.4,153.3C1363.8,162.7 1372.2,171.4 1377.6,177.5C1383.0,183.6 1387.7,187.9 1389.7,190.0
M1373.6,0.0C1371.9,4.0 1365.2,14.1 1363.5,24.2C1361.8,34.3 1361.8,47.7 1363.5,60.5C1365.2,73.3 1368.5,88.1 1373.6,100.8C1378.6,113.6 1385.0,126.4 1393.7,137.2C1402.5,147.9 1413.9,158.0 1426.0,165.4C1438.1,172.8 1454.2,177.4 1466.3,181.5C1478.4,185.6 1493.2,188.6 1498.6,190.0
M1611.6,190.0C1612.6,183.9 1616.9,164.8 1617.6,153.3C1618.3,141.8 1617.9,132.4 1615.6,121.0C1613.2,109.6 1609.5,96.1 1603.5,84.7C1597.4,73.3 1588.7,62.5 1579.3,52.4C1569.9,42.4 1556.4,32.9 1547.0,24.2C1537.6,15.5 1526.8,4.0 1522.8,0.0
M1651.9,190.0C1654.6,184.6 1666.0,168.8 1668.0,157.3C1670.0,145.8 1667.4,133.8 1664.0,121.0C1660.6,108.2 1653.2,92.8 1647.9,80.7C1642.5,68.6 1639.1,59.2 1631.7,48.4C1624.3,37.6 1610.9,24.2 1603.5,16.1C1596.1,8.1 1590.0,2.7 1587.4,0.0
M1692.2,190.0C1693.6,185.2 1700.3,171.5 1700.3,161.4C1700.3,151.2 1696.9,142.5 1692.2,129.1C1687.5,115.6 1678.8,94.8 1672.1,80.7C1665.3,66.6 1657.9,55.1 1651.9,44.4C1645.8,33.6 1641.1,23.5 1635.8,16.1C1630.4,8.7 1622.3,2.7 1619.6,0.0
M1748.7,190.0C1748.4,187.2 1752.1,180.9 1746.7,173.5C1741.3,166.0 1724.8,157.3 1716.4,145.2C1708.0,133.1 1703.0,115.0 1696.3,100.8C1689.5,86.7 1682.2,73.3 1676.1,60.5C1670.0,47.7 1664.7,34.3 1660.0,24.2C1655.3,14.1 1649.9,4.0 1647.9,0.0
M1813.3,190.0C1810.6,183.9 1803.8,164.8 1797.1,153.3C1790.4,141.8 1780.3,132.4 1772.9,121.0C1765.5,109.6 1758.8,97.5 1752.7,84.7C1746.7,71.9 1741.3,56.5 1736.6,44.4C1731.9,32.3 1727.2,19.5 1724.5,12.1C1721.8,4.7 1721.1,2.0 1720.5,0.0
M1849.6,190.0C1846.9,184.6 1840.8,168.8 1833.4,157.3C1826.0,145.8 1813.9,133.8 1805.2,121.0C1796.4,108.2 1788.4,94.1 1781.0,80.7C1773.6,67.2 1766.9,53.8 1760.8,40.3C1754.8,26.9 1747.4,6.7 1744.7,0.0
M1881.8,190.0C1878.5,183.9 1869.7,166.1 1861.7,153.3C1853.6,140.4 1842.2,126.4 1833.4,112.9C1824.7,99.5 1816.6,85.4 1809.2,72.6C1801.8,59.8 1795.1,48.4 1789.0,36.3C1783.0,24.2 1775.6,6.1 1772.9,0.0
M1924.2,109.2C1921.8,107.1 1917.8,103.6 1910.1,96.8C1902.3,90.0 1887.9,79.3 1877.8,68.6C1867.7,57.8 1856.3,43.7 1849.6,32.3C1842.8,20.8 1839.5,5.4 1837.5,0.0
M1924.2,77.0C1921.8,74.2 1916.5,68.0 1910.1,60.5C1903.7,53.1 1892.6,42.4 1885.9,32.3C1879.1,22.2 1872.4,5.4 1869.7,0.0
M1924.2,52.4C1921.8,47.7 1914.4,32.9 1910.1,24.2C1905.7,15.5 1900.0,4.0 1898.0,0.0
M1924.2,190.4C1921.8,187.6 1915.8,180.3 1910.1,173.5C1904.3,166.6 1898.6,159.3 1889.9,149.3C1881.2,139.2 1867.0,125.1 1857.6,112.9C1848.2,100.8 1839.5,86.1 1833.4,76.6C1827.4,67.2 1823.3,59.8 1821.3,56.5"/>
<path fill="none" stroke="#c3bfbb" stroke-width="3.4" stroke-linecap="round" d="M66.6,1690.0C70.9,1693.7 83.7,1705.5 92.8,1712.2C101.9,1718.9 114.0,1724.0 121.0,1730.3C128.1,1736.7 131.8,1744.1 135.1,1750.5C138.5,1756.9 136.8,1764.5 141.2,1768.7C145.6,1772.8 154.0,1775.9 161.4,1775.5C168.8,1775.2 176.1,1770.5 185.6,1766.6C195.0,1762.8 205.7,1755.2 217.8,1752.5C229.9,1749.8 243.4,1751.9 258.2,1750.5C273.0,1749.2 292.5,1745.9 306.6,1744.5C320.7,1743.0 330.8,1741.8 342.9,1741.6C355.0,1741.4 367.8,1744.5 379.2,1743.2C390.6,1742.0 400.7,1736.5 411.5,1734.4C422.2,1732.2 434.3,1729.7 443.7,1730.3C453.1,1731.0 459.2,1735.7 467.9,1738.4C476.7,1741.1 488.8,1746.1 496.2,1746.5C503.6,1746.8 506.9,1744.8 512.3,1740.4C517.7,1736.1 521.7,1725.6 528.4,1720.3C535.2,1714.9 543.2,1711.7 552.6,1708.2C562.1,1704.6 579.5,1700.4 584.9,1698.9
M12.1,1690.0C12.8,1696.7 13.4,1719.6 16.1,1730.3C18.8,1741.1 24.2,1746.8 28.2,1754.5C32.3,1762.3 34.3,1769.3 40.3,1776.7C46.4,1784.1 56.5,1791.2 64.5,1798.9C72.6,1806.6 80.0,1814.4 88.7,1823.1C97.5,1831.9 108.9,1844.0 117.0,1851.4C125.1,1858.8 129.8,1863.8 137.2,1867.5C144.5,1871.2 154.6,1873.5 161.4,1873.5C168.1,1873.5 171.4,1871.2 177.5,1867.5C183.5,1863.8 192.3,1856.1 197.7,1851.4C203.0,1846.6 205.1,1843.3 209.8,1839.3C214.5,1835.2 217.8,1830.2 225.9,1827.2C234.0,1824.1 248.8,1822.8 258.2,1821.1C267.6,1819.4 273.0,1819.4 282.4,1817.1C291.8,1814.7 303.9,1809.7 314.6,1807.0C325.4,1804.3 334.8,1802.1 346.9,1800.9C359.0,1799.7 375.2,1798.7 387.3,1799.7C399.4,1800.7 410.1,1804.1 419.5,1807.0C428.9,1809.9 435.7,1813.0 443.7,1817.1C451.8,1821.1 461.2,1826.1 467.9,1831.2C474.7,1836.2 478.7,1843.0 484.1,1847.3C489.4,1851.7 494.2,1855.1 500.2,1857.4C506.3,1859.8 514.3,1861.4 520.4,1861.4C526.4,1861.4 531.8,1860.4 536.5,1857.4C541.2,1854.4 543.9,1848.3 548.6,1843.3C553.3,1838.2 557.3,1832.2 564.7,1827.2C572.1,1822.1 582.2,1817.7 593.0,1813.0C603.7,1808.3 617.9,1804.0 629.3,1798.9C640.7,1793.9 652.1,1788.8 661.6,1782.8C671.0,1776.7 677.7,1770.0 685.8,1762.6C693.8,1755.2 701.9,1745.8 710.0,1738.4C718.0,1731.0 726.8,1724.8 734.2,1718.2C741.6,1711.6 751.0,1702.1 754.3,1698.9
M-14.1,1738.4C-11.8,1747.8 -3.7,1780.1 0.0,1794.9C3.7,1809.7 4.0,1817.1 8.1,1827.2C12.1,1837.2 18.2,1847.0 24.2,1855.4C30.3,1863.8 41.0,1873.9 44.4,1877.6
M665.6,1877.6C669.0,1875.2 675.7,1868.5 685.8,1863.5C695.8,1858.4 712.7,1853.4 726.1,1847.3C739.5,1841.3 754.3,1833.9 766.4,1827.2C778.5,1820.4 790.0,1814.4 798.7,1807.0C807.4,1799.6 813.5,1790.8 818.9,1782.8C824.3,1774.7 826.3,1767.3 831.0,1758.6C835.7,1749.8 841.7,1737.7 847.1,1730.3C852.5,1722.9 857.2,1719.4 863.3,1714.2C869.3,1709.0 880.1,1701.4 883.4,1698.9
M867.3,1877.6C872.0,1873.9 887.5,1863.8 895.5,1855.4C903.6,1847.0 911.0,1837.2 915.7,1827.2C920.4,1817.1 919.7,1802.3 923.8,1794.9C927.8,1787.5 933.8,1786.5 939.9,1782.8C945.9,1779.1 956.7,1774.4 960.1,1772.7
M950.0,1775.5C955.4,1773.7 971.5,1769.1 982.3,1764.6C993.0,1760.1 1003.1,1754.2 1014.5,1748.5C1026.0,1742.8 1040.1,1736.1 1050.8,1730.3C1061.6,1724.6 1071.0,1718.6 1079.1,1714.2C1087.2,1709.8 1092.5,1706.5 1099.3,1704.1C1106.0,1701.7 1114.7,1700.6 1119.4,1699.7C1124.1,1698.8 1126.1,1699.0 1127.5,1698.9
M950.0,1873.5C954.0,1872.0 965.5,1865.9 974.2,1864.3C982.9,1862.6 995.0,1863.3 1002.4,1863.5C1009.8,1863.7 1010.5,1866.5 1018.6,1865.5C1026.6,1864.5 1042.1,1859.8 1050.8,1857.4C1059.6,1855.1 1063.6,1852.7 1071.0,1851.4C1078.4,1850.0 1087.2,1850.7 1095.2,1849.3C1103.3,1848.0 1110.0,1846.0 1119.4,1843.3C1128.8,1840.6 1140.9,1836.9 1151.7,1833.2C1162.5,1829.5 1175.2,1825.5 1184.0,1821.1C1192.7,1816.7 1196.7,1812.0 1204.1,1807.0C1211.5,1801.9 1220.3,1795.9 1228.3,1790.8C1236.4,1785.8 1245.1,1780.1 1252.5,1776.7C1259.9,1773.4 1268.0,1771.1 1272.7,1770.7C1277.4,1770.2 1276.7,1774.6 1280.8,1773.9C1284.8,1773.2 1290.2,1769.1 1296.9,1766.6C1303.6,1764.2 1311.7,1762.1 1321.1,1759.4C1330.5,1756.7 1342.6,1754.7 1353.4,1750.5C1364.1,1746.3 1374.9,1739.8 1385.7,1734.4C1396.4,1729.0 1407.8,1721.9 1417.9,1718.2C1428.0,1714.5 1436.8,1713.2 1446.2,1712.2C1455.6,1711.2 1463.6,1711.2 1474.4,1712.2C1485.2,1713.2 1498.6,1715.2 1510.7,1718.2C1522.8,1721.3 1535.6,1726.6 1547.0,1730.3C1558.4,1734.0 1568.5,1737.7 1579.3,1740.4C1590.0,1743.1 1600.8,1745.1 1611.6,1746.5C1622.3,1747.8 1635.1,1747.5 1643.8,1748.5C1652.6,1749.5 1657.3,1749.2 1664.0,1752.5C1670.7,1755.9 1676.8,1763.3 1684.2,1768.7C1691.6,1774.0 1701.6,1780.1 1708.4,1784.8C1715.1,1789.5 1719.1,1792.5 1724.5,1796.9C1729.9,1801.3 1733.2,1806.3 1740.6,1811.0C1748.0,1815.7 1762.2,1819.1 1768.9,1825.1C1775.6,1831.2 1778.0,1838.6 1781.0,1847.3C1784.0,1856.1 1786.0,1872.5 1787.0,1877.6
M1244.5,1877.6C1249.2,1875.9 1263.3,1871.2 1272.7,1867.5C1282.1,1863.8 1292.9,1860.1 1300.9,1855.4C1309.0,1850.7 1314.4,1844.0 1321.1,1839.3C1327.8,1834.5 1333.9,1830.2 1341.3,1827.2C1348.7,1824.1 1356.8,1822.8 1365.5,1821.1C1374.2,1819.4 1384.3,1818.7 1393.7,1817.1C1403.1,1815.4 1413.2,1812.8 1422.0,1811.0C1430.7,1809.2 1437.4,1806.8 1446.2,1806.2C1454.9,1805.5 1463.6,1806.5 1474.4,1807.0C1485.2,1807.5 1500.0,1808.5 1510.7,1809.0C1521.5,1809.5 1530.9,1808.5 1538.9,1810.2C1547.0,1811.9 1551.7,1814.6 1559.1,1819.1C1566.5,1823.6 1574.6,1831.2 1583.3,1837.2C1592.1,1843.3 1602.8,1849.7 1611.6,1855.4C1620.3,1861.1 1630.0,1867.8 1635.8,1871.5C1641.5,1875.2 1644.2,1876.6 1645.8,1877.6
M1736.6,1698.9C1740.0,1701.4 1748.0,1707.6 1756.8,1714.2C1765.5,1720.8 1778.3,1729.0 1789.0,1738.4C1799.8,1747.8 1811.9,1760.6 1821.3,1770.7C1830.7,1780.8 1838.8,1789.5 1845.5,1798.9C1852.2,1808.3 1857.0,1817.7 1861.7,1827.2C1866.4,1836.6 1869.7,1847.0 1873.8,1855.4C1877.8,1863.8 1883.8,1873.9 1885.9,1877.6
M1849.6,1698.9C1853.6,1704.1 1865.7,1719.7 1873.8,1730.3C1881.8,1741.0 1891.9,1754.9 1898.0,1762.6C1904.0,1770.3 1905.7,1771.6 1910.1,1776.7C1914.4,1781.8 1921.8,1790.5 1924.2,1793.2
M5.0,180.0C6.4,184.4 11.7,196.7 13.3,206.7C15.0,216.7 15.8,230.0 15.0,240.0C14.2,250.0 10.3,260.8 8.3,266.7C6.4,272.5 4.7,273.3 3.3,275.0C1.9,276.7 0.6,276.4 0.0,276.7
M85.0,315.0C81.9,316.9 72.5,322.5 66.7,326.7C60.8,330.8 55.6,335.0 50.0,340.0C44.4,345.0 38.9,351.7 33.3,356.7C27.8,361.7 22.2,366.7 16.7,370.0C11.1,373.3 2.8,375.6 0.0,376.7
M85.0,426.7C83.1,429.4 76.9,437.8 73.3,443.3C69.7,448.9 68.9,455.0 63.3,460.0C57.8,465.0 47.2,470.6 40.0,473.3C32.8,476.1 26.7,474.7 20.0,476.7C13.3,478.6 3.3,483.6 0.0,485.0
M85.0,541.7C81.9,544.7 73.1,555.3 66.7,560.0C60.3,564.7 51.7,565.6 46.7,570.0C41.7,574.4 38.9,579.4 36.7,586.7C34.4,593.9 35.0,603.3 33.3,613.3C31.7,623.3 28.9,635.6 26.7,646.7C24.4,657.8 21.4,670.6 20.0,680.0C18.6,689.4 18.6,699.4 18.3,703.3
M18.3,693.3C16.9,696.1 11.7,702.2 10.0,710.0C8.3,717.8 7.8,729.4 8.3,740.0C8.9,750.6 13.1,763.3 13.3,773.3C13.6,783.3 12.2,792.8 10.0,800.0C7.8,807.2 1.7,813.9 0.0,816.7
M78.3,693.3C76.7,696.1 71.4,702.2 68.3,710.0C65.3,717.8 62.2,729.4 60.0,740.0C57.8,750.6 56.4,762.8 55.0,773.3C53.6,783.9 54.2,793.9 51.7,803.3C49.2,812.8 43.1,821.1 40.0,830.0C36.9,838.9 33.3,848.3 33.3,856.7C33.3,865.0 36.1,875.0 40.0,880.0C43.9,885.0 51.1,887.2 56.7,886.7C62.2,886.1 68.6,882.2 73.3,876.7C78.1,871.1 83.1,857.2 85.0,853.3
M0.0,928.3C2.2,929.2 9.4,929.7 13.3,933.3C17.2,936.9 21.4,942.8 23.3,950.0C25.3,957.2 25.3,966.7 25.0,976.7C24.7,986.7 23.1,1000.0 21.7,1010.0C20.3,1020.0 18.6,1029.4 16.7,1036.7C14.7,1043.9 12.8,1050.3 10.0,1053.3C7.2,1056.4 1.7,1054.7 0.0,1055.0
M85.0,981.7C83.6,985.3 79.7,995.8 76.7,1003.3C73.6,1010.8 69.4,1017.8 66.7,1026.7C63.9,1035.6 62.8,1047.8 60.0,1056.7C57.2,1065.6 54.4,1072.8 50.0,1080.0C45.6,1087.2 38.9,1094.4 33.3,1100.0C27.8,1105.6 22.2,1109.7 16.7,1113.3C11.1,1116.9 2.8,1120.3 0.0,1121.7
M85.0,1178.3C83.3,1180.3 78.3,1185.6 75.0,1190.0C71.7,1194.4 67.8,1200.8 65.0,1205.0C62.2,1209.2 59.4,1213.3 58.3,1215.0
M71.7,1200.0C68.1,1203.3 56.4,1212.8 50.0,1220.0C43.6,1227.2 38.9,1236.9 33.3,1243.3C27.8,1249.7 22.2,1255.0 16.7,1258.3C11.1,1261.7 2.8,1262.5 0.0,1263.3
M85.0,1481.7C84.2,1483.6 80.8,1489.2 80.0,1493.3C79.2,1497.5 79.2,1503.1 80.0,1506.7C80.8,1510.3 84.2,1513.6 85.0,1515.0
M5.0,1466.7C6.4,1471.1 10.3,1484.4 13.3,1493.3C16.4,1502.2 20.6,1510.6 23.3,1520.0C26.1,1529.4 28.3,1540.6 30.0,1550.0C31.7,1559.4 31.1,1567.2 33.3,1576.7C35.6,1586.1 40.4,1597.2 43.3,1606.7C46.2,1616.1 48.2,1623.3 50.7,1633.3C53.2,1643.3 55.7,1656.9 58.3,1666.7C61.0,1676.4 65.3,1687.5 66.7,1691.7
M0.0,1623.3C1.1,1627.8 4.9,1640.0 6.7,1650.0C8.4,1660.0 9.8,1676.4 10.7,1683.3C11.6,1690.3 11.9,1690.3 12.1,1691.7
M2835.0,180.0C2830.3,181.1 2813.1,182.2 2806.7,186.7C2800.3,191.1 2797.8,198.9 2796.7,206.7C2795.6,214.4 2797.8,225.0 2800.0,233.3C2802.2,241.7 2806.7,248.9 2810.0,256.7C2813.3,264.4 2816.9,270.6 2820.0,280.0C2823.1,289.4 2826.1,302.2 2828.3,313.3C2830.6,324.4 2831.9,335.6 2833.3,346.7C2834.7,357.8 2834.4,367.8 2836.7,380.0C2838.9,392.2 2843.6,407.8 2846.7,420.0C2849.7,432.2 2852.8,443.3 2855.0,453.3C2857.2,463.3 2859.2,475.6 2860.0,480.0
M2776.7,570.0C2776.9,571.1 2776.6,570.6 2778.0,576.7C2779.4,582.8 2781.6,597.2 2785.0,606.7C2788.4,616.1 2793.3,625.3 2798.3,633.3C2803.3,641.4 2808.6,648.6 2815.0,655.0C2821.4,661.4 2829.2,666.1 2836.7,671.7C2844.2,677.2 2856.1,685.6 2860.0,688.3
M2776.7,718.3C2779.7,720.3 2788.3,725.8 2795.0,730.0C2801.7,734.2 2809.7,739.2 2816.7,743.3C2823.6,747.5 2830.6,751.4 2836.7,755.0C2842.8,758.6 2849.3,761.8 2853.3,765.0C2857.4,768.2 2859.6,772.6 2860.8,774.2
M2859.2,540.0C2859.0,542.8 2858.1,550.3 2858.3,556.7C2858.6,563.1 2860.4,574.7 2860.8,578.3
M2776.7,811.0C2780.6,812.5 2792.8,815.7 2800.0,820.0C2807.2,824.3 2812.8,829.4 2820.0,836.7C2827.2,843.9 2838.3,855.8 2843.3,863.3C2848.3,870.8 2849.7,875.0 2850.0,881.7C2850.3,888.3 2848.3,898.3 2845.0,903.3C2841.7,908.3 2836.9,910.8 2830.0,911.7C2823.1,912.5 2812.2,910.4 2803.3,908.3C2794.4,906.3 2781.1,900.8 2776.7,899.3
M2776.7,988.7C2778.9,988.3 2785.0,986.2 2790.0,986.7C2795.0,987.2 2800.6,989.7 2806.7,991.7C2812.8,993.6 2820.0,996.7 2826.7,998.3C2833.3,1000.0 2840.8,1000.7 2846.7,1001.7C2852.5,1002.7 2859.2,1003.9 2861.7,1004.3
M2776.7,1093.3C2779.2,1094.7 2787.8,1097.2 2791.7,1101.7C2795.6,1106.1 2797.5,1111.4 2800.0,1120.0C2802.5,1128.6 2806.4,1142.8 2806.7,1153.3C2806.9,1163.9 2803.9,1173.3 2801.7,1183.3C2799.4,1193.3 2794.7,1208.3 2793.3,1213.3
M2796.7,1200.0C2795.8,1202.2 2795.0,1209.0 2791.7,1213.3C2788.3,1217.7 2779.2,1223.9 2776.7,1226.0
M2861.7,1324.3C2858.1,1325.8 2846.9,1330.2 2840.0,1333.3C2833.1,1336.5 2824.4,1340.0 2820.0,1343.3C2815.6,1346.7 2814.7,1350.0 2813.3,1353.3C2811.9,1356.7 2813.3,1361.4 2811.7,1363.3C2810.0,1365.3 2806.4,1363.1 2803.3,1365.0C2800.3,1366.9 2797.8,1370.6 2793.3,1375.0C2788.9,1379.4 2779.4,1388.6 2776.7,1391.3
M2861.7,1428.0C2860.3,1430.0 2856.9,1436.3 2853.3,1440.0C2849.7,1443.7 2844.4,1445.6 2840.0,1450.0C2835.6,1454.4 2831.1,1462.2 2826.7,1466.7C2822.2,1471.1 2817.2,1472.2 2813.3,1476.7C2809.4,1481.1 2806.7,1488.9 2803.3,1493.3C2800.0,1497.8 2797.8,1500.2 2793.3,1503.3C2788.9,1506.5 2779.4,1510.8 2776.7,1512.3
M2861.7,1585.7C2859.2,1587.2 2852.5,1592.3 2846.7,1595.0C2840.8,1597.7 2833.9,1599.4 2826.7,1601.7C2819.4,1603.9 2811.7,1605.4 2803.3,1608.3C2795.0,1611.2 2781.1,1617.2 2776.7,1619.0
M2861.7,1669.0C2858.1,1671.1 2847.5,1677.9 2840.0,1681.7C2832.5,1685.4 2823.3,1688.4 2816.7,1691.7C2810.0,1694.9 2802.8,1699.4 2800.0,1701.0
M87.7,0.0C89.3,1.3 94.0,5.3 97.8,7.6C101.5,9.9 105.1,11.9 110.4,13.9C115.6,15.9 123.0,18.1 129.3,19.5C135.6,21.0 141.9,21.8 148.2,22.7C154.5,23.5 161.8,23.6 167.1,24.6C172.3,25.5 175.5,28.6 179.7,28.4C183.9,28.2 188.1,24.5 192.3,23.3C196.5,22.2 200.7,22.6 204.9,21.4C209.1,20.3 213.3,18.5 217.5,16.4C221.7,14.3 226.3,11.6 230.1,8.8C233.9,6.1 238.5,1.5 240.2,0.0
M11.4,0.0C12.6,2.7 15.5,10.5 18.3,16.4C21.2,22.3 24.6,29.2 28.4,35.3C32.2,41.4 36.8,48.1 41.0,52.9C45.2,57.8 48.4,61.1 53.6,64.3C58.9,67.4 66.2,69.8 72.5,71.9C78.8,74.0 86.2,75.2 91.5,76.9C96.7,78.6 99.9,79.6 104.1,81.9C108.3,84.2 113.5,87.6 116.7,90.8C119.8,93.9 121.3,97.1 123.0,100.8C124.6,104.6 125.7,107.4 126.7,113.5C127.8,119.5 128.9,130.8 129.4,137.1C130.0,143.5 129.3,147.1 130.1,151.4C131.0,155.7 133.2,157.4 134.4,162.9C135.6,168.3 136.7,179.5 137.3,184.3C137.9,189.0 137.9,190.2 138.0,191.4
M0.0,152.5C1.2,155.3 6.5,163.2 7.3,169.4C8.1,175.7 5.2,186.6 4.8,190.0
M147.2,190.0C148.2,186.2 150.3,175.5 153.3,167.4C156.3,159.3 160.7,148.9 165.4,141.2C170.1,133.5 174.1,126.9 181.5,121.0C188.9,115.1 198.3,112.4 209.8,105.7C221.2,99.0 234.0,88.9 250.1,80.7C266.2,72.5 287.8,62.7 306.6,56.5C325.4,50.3 346.9,44.9 363.0,43.6C379.2,42.2 389.9,44.2 403.4,48.4C416.8,52.6 430.3,61.5 443.7,68.6C457.2,75.6 472.0,85.7 484.1,90.8C496.2,95.8 502.9,98.2 516.3,98.8C529.8,99.5 545.9,97.8 564.7,94.8C583.6,91.8 610.1,84.4 629.3,80.7C648.5,77.0 669.4,75.7 680.1,72.6C690.8,69.5 689.0,65.1 693.4,61.8C697.9,58.6 702.6,55.8 706.9,53.1C711.1,50.4 716.2,48.3 719.0,45.7C721.8,43.1 722.7,40.8 723.7,37.6C724.7,34.5 724.0,30.5 725.0,26.9C726.1,23.3 727.6,19.5 729.7,16.1C731.9,12.8 735.1,9.4 737.8,6.7C740.5,4.0 744.5,1.1 745.9,0.0
M439.7,0.0C443.7,2.4 451.1,9.4 463.9,14.1C476.7,18.8 499.5,25.2 516.3,28.2C533.1,31.3 551.3,32.9 564.7,32.3C578.2,31.6 588.6,28.2 597.0,24.2C605.4,20.2 611.8,12.1 615.2,8.1C618.5,4.0 616.8,1.3 617.2,0.0
M912.6,182.2C915.3,181.4 924.5,180.3 928.7,177.5C933.0,174.7 936.4,171.4 938.2,165.4C939.9,159.3 939.0,148.6 939.5,141.2C939.9,133.8 939.5,127.5 940.8,121.0C942.2,114.5 944.4,106.9 947.6,102.2C950.7,97.5 955.0,93.7 959.7,92.8C964.4,91.9 970.9,96.6 975.8,96.8C980.7,97.0 985.2,95.7 989.2,94.1C993.3,92.5 997.5,89.2 1000.0,87.4C1002.5,85.6 1000.2,86.3 1004.5,83.4C1008.9,80.4 1019.8,74.6 1026.1,69.9C1032.3,65.2 1037.5,59.0 1042.2,55.1C1046.9,51.2 1048.9,48.6 1054.3,46.4C1059.7,44.1 1067.7,42.6 1074.5,41.7C1081.2,40.8 1086.8,40.1 1094.6,41.0C1102.5,41.9 1114.1,44.7 1121.5,47.1C1128.9,49.4 1132.3,53.1 1139.0,55.1C1145.7,57.1 1154.7,56.7 1161.8,59.2C1169.0,61.6 1175.3,65.9 1182.0,69.9C1188.7,73.9 1195.5,79.6 1202.2,83.4C1208.9,87.2 1216.8,89.0 1222.4,92.8C1228.0,96.6 1231.8,102.2 1235.8,106.2C1239.8,110.3 1242.5,115.0 1246.6,117.0C1250.6,119.0 1255.6,118.0 1260.0,118.3C1264.4,118.7 1269.6,119.9 1272.7,119.0C1275.8,118.1 1278.8,118.3 1278.8,112.9C1278.8,107.6 1276.4,95.5 1272.7,86.7C1269.0,78.0 1262.0,70.9 1256.6,60.5C1251.2,50.1 1245.1,34.3 1240.4,24.2C1235.7,14.1 1230.4,4.0 1228.3,0.0
M1018.0,187.6C1018.7,185.0 1019.3,176.2 1022.0,172.1C1024.7,168.0 1029.4,165.4 1034.1,162.7C1038.8,160.0 1046.2,158.4 1050.3,156.0C1054.3,153.5 1055.9,150.1 1058.3,147.9C1060.8,145.7 1062.8,145.0 1065.0,142.5C1067.3,140.1 1069.1,136.0 1071.8,133.1C1074.5,130.2 1077.4,126.8 1081.2,125.0C1085.0,123.2 1089.5,122.6 1094.6,122.4C1099.8,122.1 1106.5,122.4 1112.1,123.7C1117.7,125.0 1122.2,127.7 1128.2,130.4C1134.3,133.1 1141.7,136.2 1148.4,139.8C1155.1,143.4 1161.8,147.9 1168.6,151.9C1175.3,156.0 1182.0,160.4 1188.7,164.0C1195.5,167.6 1201.1,170.5 1208.9,173.4C1216.8,176.4 1228.6,179.2 1235.8,181.5C1243.0,183.9 1249.2,186.6 1251.9,187.6
M215.0,187.0C217.4,185.7 224.7,182.1 229.7,179.4C234.7,176.7 239.6,173.2 244.9,171.0C250.2,168.8 257.5,168.8 261.7,166.0C265.9,163.2 266.4,158.4 270.0,154.2C273.6,150.0 277.9,144.7 283.5,140.8C289.1,136.9 296.1,133.1 303.7,130.7C311.3,128.3 319.1,126.8 328.9,126.5C338.7,126.2 351.3,127.2 362.5,129.0C373.7,130.8 384.8,133.5 396.0,137.4C407.2,141.3 419.0,147.5 429.7,152.5C440.4,157.5 449.6,161.8 460.0,167.6C470.4,173.3 486.7,183.8 492.0,187.0
M774.8,187.6C775.6,185.4 778.5,181.4 779.5,174.8C780.5,168.2 779.9,156.9 780.8,147.9C781.7,138.9 783.1,130.4 784.9,121.0C786.7,111.6 789.1,100.8 791.6,91.4C794.1,82.0 796.8,72.4 799.7,64.5C802.6,56.7 805.5,50.0 809.1,44.4C812.7,38.8 816.2,34.5 821.2,30.9C826.1,27.3 833.5,25.8 838.7,22.9C843.8,19.9 849.4,16.4 852.1,13.4C854.8,10.5 853.7,7.6 854.8,5.4C855.9,3.1 858.2,0.9 858.8,0.0
M1438.1,34.3C1440.8,33.4 1446.8,28.0 1454.2,29.0C1461.6,30.1 1472.4,35.1 1482.5,40.3C1492.6,45.6 1506.7,54.5 1514.7,60.5C1522.8,66.6 1527.2,71.3 1530.9,76.6C1534.6,82.0 1537.3,87.3 1536.9,92.8C1536.6,98.3 1532.6,107.0 1528.9,109.7C1525.2,112.4 1521.8,110.1 1514.7,108.9C1507.7,107.8 1495.9,105.9 1486.5,102.9C1477.1,99.8 1466.0,95.8 1458.3,90.8C1450.5,85.7 1444.3,79.0 1440.1,72.6C1435.9,66.2 1433.6,58.8 1433.3,52.4C1432.9,46.1 1437.3,37.3 1438.1,34.3
M1357.4,0.0C1355.1,4.0 1346.0,14.8 1343.3,24.2C1340.6,33.6 1340.3,44.4 1341.3,56.5C1342.3,68.6 1345.3,84.0 1349.4,96.8C1353.4,109.6 1358.8,121.7 1365.5,133.1C1372.2,144.5 1382.3,156.6 1389.7,165.4C1397.1,174.1 1405.8,181.5 1409.9,185.6C1413.9,189.7 1413.2,189.3 1413.9,190.0
M1559.1,0.0C1561.1,2.7 1563.8,8.7 1571.2,16.1C1578.6,23.5 1594.1,33.6 1603.5,44.4C1612.9,55.1 1621.6,67.9 1627.7,80.7C1633.7,93.5 1638.4,107.6 1639.8,121.0C1641.1,134.5 1637.8,149.9 1635.8,161.4C1633.7,172.9 1629.0,185.2 1627.7,190.0
M1776.9,190.0C1776.3,185.2 1776.9,171.5 1772.9,161.4C1768.9,151.2 1760.8,139.8 1752.7,129.1C1744.7,118.3 1731.9,108.2 1724.5,96.8C1717.1,85.4 1712.4,72.6 1708.4,60.5C1704.3,48.4 1704.3,34.3 1700.3,24.2C1696.3,14.1 1686.9,4.0 1684.2,0.0
M1924.2,147.7C1921.8,146.0 1917.8,143.0 1910.1,137.2C1902.3,131.4 1889.9,123.0 1877.8,112.9C1865.7,102.9 1848.2,88.7 1837.5,76.6C1826.7,64.5 1819.0,51.1 1813.3,40.3C1807.5,29.6 1804.5,18.8 1803.2,12.1C1801.8,5.4 1804.8,2.0 1805.2,0.0"/>
</g>
<use href="#tl" x="1922" y="0"/>
<g fill="none" stroke="#c2c2c2" stroke-width="3.4" stroke-linecap="butt">
<path d="M228.5,140 V184 M185,183.5 H271"/>
<path d="M868.9,139.8 V184 M826.6,183 H911.3"/>
<path d="M1510,6 V32 M1510,60 V87 M1510,115 V141 M1510,169 V190"/>
<path d="M1510,1695 V1705.5 M1510,1732.4 V1758.6 M1510,1786 V1812.2 M1510,1840 V1866.7"/>
<path d="M0,1465.7 H15 M41.7,1465.7 H68.3 M95,1465.7 H100"/>
<path d="M2150,140 V184 M2107,183.5 H2193"/>
<path d="M2790.8,140 V226 M2748,183 H2834"/>
<path d="M2790.8,780.7 V866.7 M2770,823.7 H2834"/>
<path d="M2771.7,1465.7 H2798.3 M2825.7,1465.7 H2852.3"/>
</g>
</svg>

<svg id="brand" viewBox="0 0 300 80">
<text x="-0.2" y="67" font-family="Liberation Sans, Arial, sans-serif" font-weight="700" font-size="68" textLength="295.2" lengthAdjust="spacingAndGlyphs" stroke-width="2.4" stroke-linejoin="round"><tspan fill="#1d1d1b" stroke="#1d1d1b">bit</tspan><tspan fill="#e42313" stroke="#e42313">voodoo</tspan></text>
</svg>

<div id="wrap">
  <div id="hdr">
    <svg id="cflogo" viewBox="0 0 40 40">
      <defs>
        <linearGradient id="cg1" x1="0" y1="0" x2="1" y2="0.35"><stop offset="0" stop-color="#a9b9d0"/><stop offset=".62" stop-color="#fff"/><stop offset="1" stop-color="#fff"/></linearGradient>
      </defs>
      <path id="rib" fill="url(#cg1)" d="M6.83,2.95 L19.5,7.6 Q22.8,8.7 25.6,6.2 Q28,4.2 30.03,2.08 L38.43,8.13 Q36.6,12.4 34.06,15.18 Q31,18.3 27.34,18.95 Q23,19.8 19.27,19.0 Q17,18.5 3.13,12.5 Z"/>
      <path fill="url(#cg1)" transform="rotate(180 19.94 20.36)" d="M6.83,2.95 L19.5,7.6 Q22.8,8.7 25.6,6.2 Q28,4.2 30.03,2.08 L38.43,8.13 Q36.6,12.4 34.06,15.18 Q31,18.3 27.34,18.95 Q23,19.8 19.27,19.0 Q17,18.5 3.13,12.5 Z"/>
    </svg>
    <svg id="cfword" viewBox="0 0 260 56"><text x="1.3" y="45.7" font-family="Liberation Sans, Arial, sans-serif" font-size="49.4" fill="#fff" stroke="#fff" stroke-width=".5" textLength="250" lengthAdjust="spacingAndGlyphs">Confluence</text></svg>
    <div class="nav" style="left:360.5px">Spaces</div>
    <div class="nav" style="left:493px">People</div>
    <div id="create">Create</div>
    <div id="more"><i style="left:16.4px"></i><i style="left:26.1px"></i><i style="left:35.8px"></i></div>
    <div id="search"></div>
    <svg id="hicons" viewBox="83 185 2695 65" style="position:absolute;left:0;top:0;width:2695px;height:65px">
      <g fill="none" stroke="#a9b8ca" stroke-width="3" stroke-linecap="round"><circle cx="2406.6" cy="216.4" r="5.4"/><path d="M2411,220.8 L2416.6,226.4" stroke-width="3.6"/></g>
      <circle cx="2476.55" cy="216.55" r="11.25" fill="none" stroke="#fff" stroke-width="2.9"/>
      <text x="2476.55" y="223.6" text-anchor="middle" font-family="Liberation Sans, Arial, sans-serif" font-weight="700" font-size="20" fill="#fff">?</text>
      <path fill="#fff" fill-rule="evenodd" d="M2550.71,207.41 L2551.25,203.83 L2556.07,203.83 L2556.61,207.41 L2558.03,208.00 L2560.96,205.85 L2564.36,209.25 L2562.21,212.18 L2562.80,213.60 L2566.38,214.14 L2566.38,218.96 L2562.80,219.50 L2562.21,220.92 L2564.36,223.85 L2560.96,227.25 L2558.03,225.10 L2556.61,225.69 L2556.07,229.27 L2551.25,229.27 L2550.71,225.69 L2549.29,225.10 L2546.36,227.25 L2542.96,223.85 L2545.11,220.92 L2544.52,219.50 L2540.94,218.96 L2540.94,214.14 L2544.52,213.60 L2545.11,212.18 L2542.96,209.25 L2546.36,205.85 L2549.29,208.00 Z M2558.16,216.55 A4.5,4.5 0 1,0 2549.16,216.55 A4.5,4.5 0 1,0 2558.16,216.55 Z"/>
      <g fill="#cfd9e5"><path d="M525,213.2 h12.6 l-6.3,6.5 z"/><path d="M2497,213.2 h12.6 l-6.3,6.5 z"/><path d="M2574.6,213.2 h12.6 l-6.3,6.5 z"/><path d="M2733.7,213.2 h12.6 l-6.3,6.5 z"/></g>
      <path fill="#fff" fill-rule="evenodd" d="M2628.2,206.7 H2644.4 Q2645.2,206.7 2645.5,207.6 L2648.9,219.4 V224.6 Q2648.9,226.1 2647.4,226.1 H2624.2 Q2622.7,226.1 2622.7,224.6 V219.4 L2626.9,207.6 Q2627.3,206.7 2628.2,206.7 Z M2630.6,209.2 L2626.9,219.3 H2632.9 V220.9 Q2632.9,223 2635,223 H2637 Q2639,223 2639,220.9 V219.3 H2645 L2642,209.2 Z"/>
      <rect x="2689" y="197.9" width="36.8" height="37.3" rx="3.5" fill="#3568a0"/>
      <ellipse cx="2707.36" cy="210.5" rx="7.2" ry="9.75" fill="#fff"/>
      <path fill="#fff" d="M2693.1,231.7 Q2694,226 2696.1,224.3 Q2698.5,222.6 2702.9,221.6 L2707.36,225 L2711.9,221.6 Q2716.5,222.6 2719,224.3 Q2721,226 2722,231.7 Z"/>
    </svg>
  </div>
  <div id="phdr"><h1>Confluence administration</h1></div>
  <div id="side">
    <div class="hd" style="top:55px">CONFIGURATION</div>
    <ul style="top:88.9px">
      <li><a>General Configuration</a></li>
      <li><a>Further Configuration</a></li>
      <li class="act">Templates for Blog posts</li>
      <li><a>Backup Administration</a></li>
      <li><a>Manage Referrers</a></li>
      <li><a>Languages</a></li>
      <li><a>Shortcut Links</a></li>
      <li><a>External Gadgets</a></li>
      <li><a>Global Templates and<br>Blueprints</a></li>
      <li><a>Import Templates</a></li>
      <li><a>Recommended Updates<br>Email</a></li>
      <li><a>Mail Servers</a></li>
      <li><a>User Macros</a></li>
      <li><a>In-app Notifications</a></li>
      <li><a>Hipchat Integration</a></li>
      <li><a>Attachment Storage</a></li>
      <li><a>Spam Prevention</a></li>
      <li><a>PDF Export Language<br>Support</a></li>
      <li><a>Configure Code Macro</a></li>
      <li><a>Office Connector</a></li>
      <li><a>WebDAV Configuration</a></li>
    </ul>
    <hr style="top:1168px">
    <div class="hd" style="top:1188.5px">ATLASSIAN MARKETPLACE</div>
    <ul style="top:1221.6px">
      <li><a>Find new add-ons</a></li>
      <li><a>Manage add-ons</a></li>
    </ul>
    <hr style="top:1326px">
  </div>
  <div id="main">
    <h1>Templates for Blog Posts</h1>
    <div id="tabs">
      <div class="tab on" style="left:31.6px;width:134.5px">Templates</div>
      <div class="tab" style="left:164.1px;width:269.2px">Enforce template usage</div>
      <div class="tab last" style="left:431.3px;width:183.5px">Space Settings</div>
    </div>
    <div id="info"><div class="bar"><svg viewBox="480 583 65 98" width="65" height="98" style="position:absolute;left:0;top:0"><circle cx="512.5" cy="632.5" r="11.5" fill="none" stroke="#fff" stroke-width="2.5"/><rect x="510.8" y="626.4" width="3.4" height="2.7" fill="#fff"/><rect x="510.8" y="631" width="3.4" height="8.6" fill="#fff"/></svg></div><p>If there are specific templates you don't want to use as blog posts templates you can disable them here.</p></div>
    <table>
      <tr><th style="width:653.4px">Name</th><th style="width:319.3px">Status</th><th style="width:941px">Description</th><th>Operations</th></tr>
      <tr><td>CEO Blog Template</td><td><span class="loz">ENABLED</span></td><td>CEO biweekly news.</td><td><a>Disable</a></td></tr>
      <tr><td>Corporate News</td><td><span class="loz">ENABLED</span></td><td>Weekly news about the firm.</td><td><a>Disable</a></td></tr>
      <tr><td>Marketing Blog Template</td><td><span class="loz">ENABLED</span></td><td>What is important today in Marketing.</td><td><a>Disable</a></td></tr>
    </table>
    <div id="links"><a>Documentation</a><span>·</span><a>Raise Support Request</a></div>
  </div>
</div>
</body>
</html>
